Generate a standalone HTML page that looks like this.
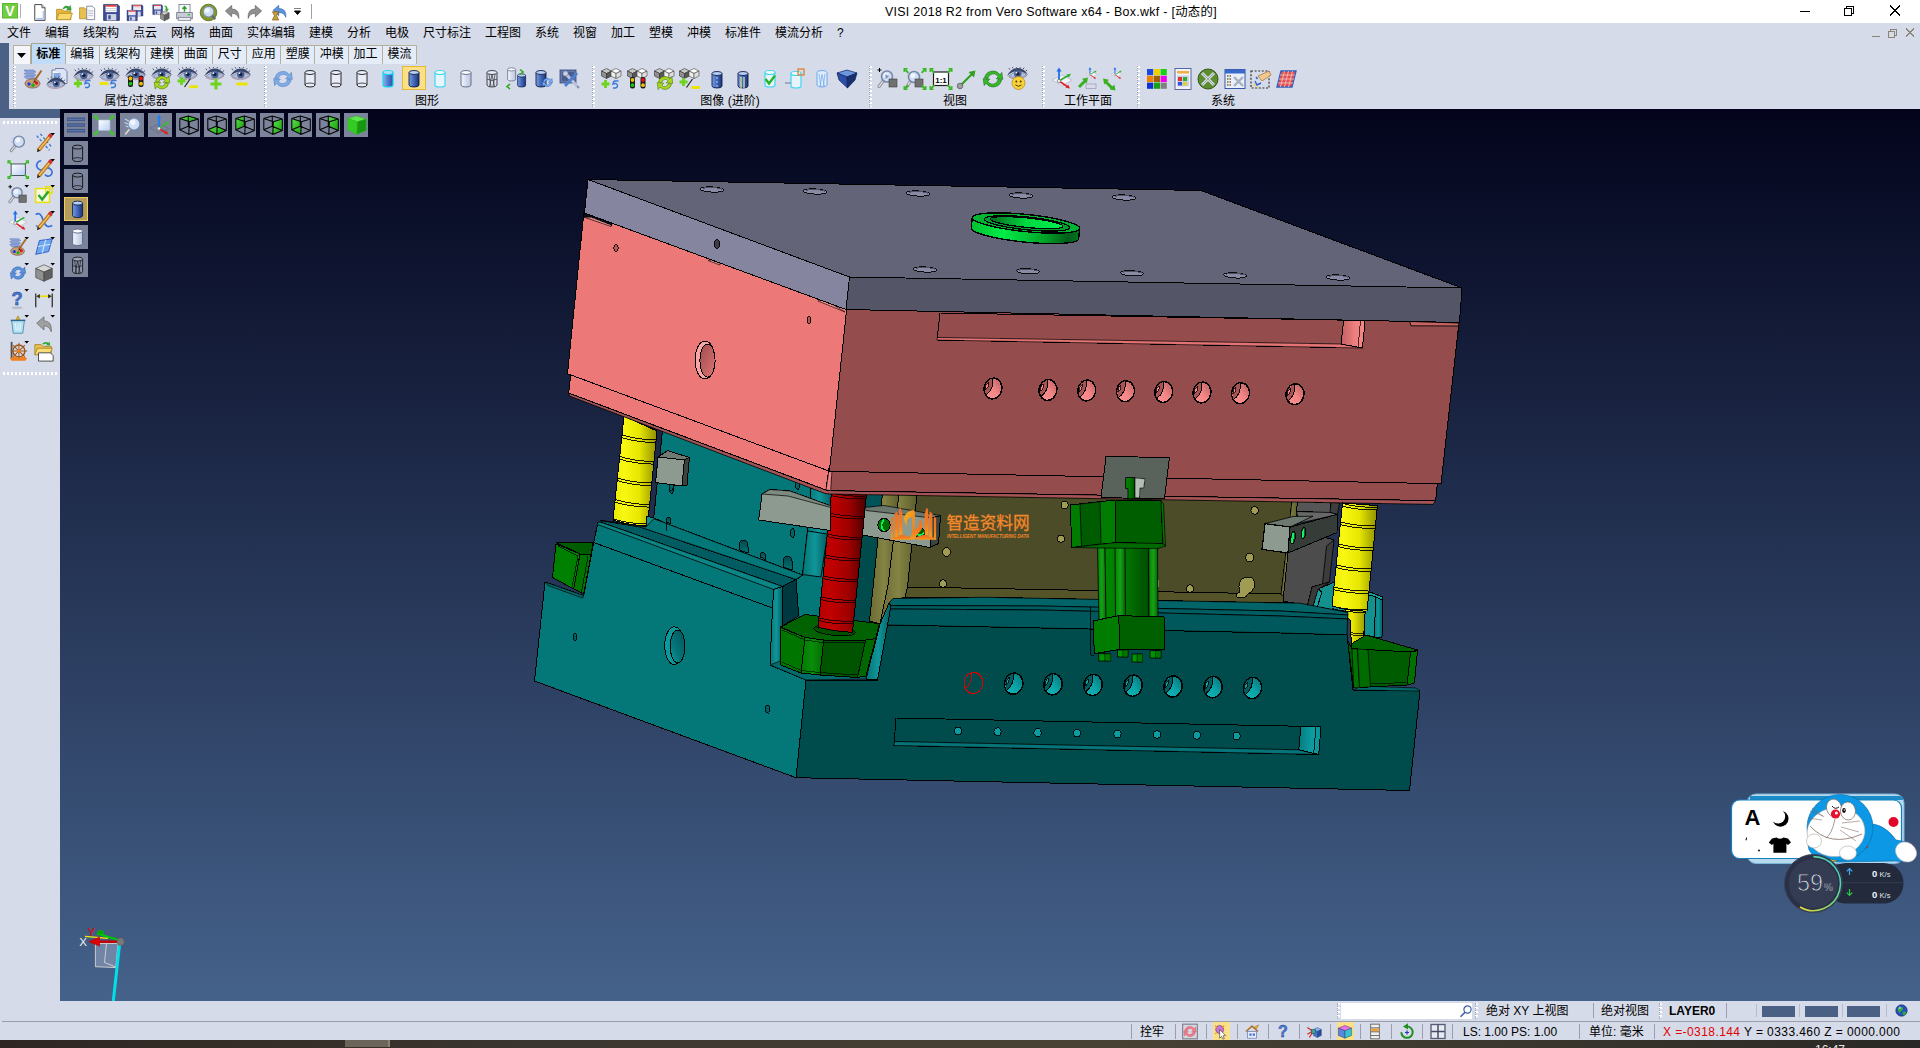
<!DOCTYPE html><html><head><meta charset="utf-8"><title>VISI 2018 R2 from Vero Software x64 - Box.wkf</title><style>
*{box-sizing:border-box;margin:0;padding:0}
html,body{width:1920px;height:1048px;overflow:hidden;background:#d6dbe9;font-family:"Liberation Sans","Noto Sans CJK SC",sans-serif;font-size:12px;color:#000}
.abs{position:absolute}
#title{position:absolute;left:0;top:0;width:1920px;height:23px;background:#fff}
#title .t{position:absolute;left:885px;top:2px;font-size:12.4px;white-space:nowrap;color:#000;letter-spacing:0.3px}
#menu{position:absolute;left:0;top:23px;width:1920px;height:20px;background:#d6dbe9}
#menu span{position:absolute;top:2px;white-space:nowrap;font-size:12px;line-height:16px}
#tb{position:absolute;left:9px;top:43px;width:1911px;height:66px;background:#d6dbe9}
#tbrow{position:absolute;left:9px;top:64px;width:1911px;height:45px;background:#d6dbe9}
#strip1{position:absolute;left:0;top:43px;width:9px;height:75px;background:#4a6084}
#strip2{position:absolute;left:0;top:109px;width:60px;height:9px;background:#4a6084}
.tab{position:absolute;top:45px;height:19px;border:1px solid #b4b09c;border-bottom:none;background:#e4ecf8;font-size:12px;line-height:17px;text-align:center;white-space:nowrap}
.tab.act{background:#c0dcf8;font-weight:bold;top:42.5px;height:21.5px;line-height:20px;border-color:#a8a890}
.lbl{position:absolute;top:94px;font-size:12px;line-height:14px;white-space:nowrap;transform:translateX(-50%)}
.sep{position:absolute;top:66px;width:3px;height:41px;background-image:repeating-linear-gradient(#fff 0 2px,transparent 2px 4px);border-left:1px dotted #a0a4b4}
#left{position:absolute;left:0;top:118px;width:60px;height:883px;background:#d6dbe9}
#canvas{position:absolute;left:60px;top:109px;width:1860px;height:892px;background:linear-gradient(#03041c,#45628b);overflow:hidden}
.vb{position:absolute;width:24px;height:24px;background:#7c849c}
#status{position:absolute;left:0;top:1001px;width:1920px;height:40px;background:#d6dbe9}
#task{position:absolute;left:0;top:1040px;width:1920px;height:8px;background:linear-gradient(90deg,#2e2622,#3c3630 30%,#484234 55%,#3e3a30 75%,#2a2826)}
.st{position:absolute;white-space:nowrap;font-size:12px;line-height:14px}
.vs{position:absolute;width:1px;height:15px;background:#9a9eae}
</style></head><body>
<div id="canvas"><svg width="1860" height="892" viewBox="60 109 1860 892" style="position:absolute;left:0;top:0" shape-rendering="crispEdges"><defs>
<linearGradient id="gy" x1="0" x2="1"><stop offset="0" stop-color="#e8e800"/><stop offset=".25" stop-color="#f8f814"/><stop offset=".6" stop-color="#e6e600"/><stop offset="1" stop-color="#8e8e00"/></linearGradient>
<linearGradient id="gr" x1="0" x2="1"><stop offset="0" stop-color="#b80000"/><stop offset=".3" stop-color="#c00000"/><stop offset=".65" stop-color="#9c0000"/><stop offset="1" stop-color="#480000"/></linearGradient>
<linearGradient id="gg" x1="0" x2="1"><stop offset="0" stop-color="#008800"/><stop offset=".45" stop-color="#007800"/><stop offset="1" stop-color="#004c00"/></linearGradient>
<linearGradient id="grod" x1="0" x2="1"><stop offset="0" stop-color="#008400"/><stop offset=".5" stop-color="#18a018"/><stop offset="1" stop-color="#006400"/></linearGradient>
<linearGradient id="gring" x1="0" x2="1"><stop offset="0" stop-color="#00c030"/><stop offset=".3" stop-color="#00ec48"/><stop offset=".7" stop-color="#00a028"/><stop offset=".9" stop-color="#005c18"/><stop offset="1" stop-color="#007820"/></linearGradient>
<linearGradient id="gringi" x1="0" x2="1"><stop offset="0" stop-color="#006820"/><stop offset=".5" stop-color="#00d840"/><stop offset="1" stop-color="#00f050"/></linearGradient>
<linearGradient id="gtl" x1="0" x2="1"><stop offset="0" stop-color="#047474"/><stop offset=".5" stop-color="#10969a"/><stop offset="1" stop-color="#035c60"/></linearGradient>
<linearGradient id="gnut" x1="0" x2="1"><stop offset="0" stop-color="#007a00"/><stop offset=".5" stop-color="#0a8c0a"/><stop offset="1" stop-color="#006c00"/></linearGradient><linearGradient id="gph2" x1="0" x2="1"><stop offset="0" stop-color="#c06060"/><stop offset=".6" stop-color="#f08080"/><stop offset="1" stop-color="#f48888"/></linearGradient><linearGradient id="gtl2" x1="0" x2="1"><stop offset="0" stop-color="#067c80"/><stop offset=".6" stop-color="#0c9ca0"/><stop offset="1" stop-color="#0a9498"/></linearGradient><linearGradient id="ghp" x1="1" y1="0" x2="0.2" y2="1"><stop offset="0" stop-color="#b05c5c"/><stop offset=".55" stop-color="#f48686"/><stop offset="1" stop-color="#fc9090"/></linearGradient><linearGradient id="ght" x1="1" y1="0" x2="0.2" y2="1"><stop offset="0" stop-color="#046c70"/><stop offset=".55" stop-color="#0aa4a8"/><stop offset="1" stop-color="#10b4b8"/></linearGradient><linearGradient id="gol" x1="0" x2="1"><stop offset="0" stop-color="#6a6a34"/><stop offset=".5" stop-color="#848444"/><stop offset="1" stop-color="#5c5c2c"/></linearGradient>
<linearGradient id="gph" x1="0" x2="1" y1="0" y2="1"><stop offset="0" stop-color="#a04c4c"/><stop offset="1" stop-color="#dc7474"/></linearGradient>
<linearGradient id="gth" x1="1" x2="0" y1="0" y2="1"><stop offset="0" stop-color="#025458"/><stop offset=".6" stop-color="#047478"/><stop offset="1" stop-color="#0c9ca0"/></linearGradient>
<linearGradient id="gwm2" x1="0" x2="0" y1="0" y2="1"><stop offset="0" stop-color="#f07020"/><stop offset=".6" stop-color="#f47c20"/><stop offset="1" stop-color="#f8a020"/></linearGradient><linearGradient id="gwm" x1="0" x2="1" y1="0" y2="1"><stop offset="0" stop-color="#f8b018"/><stop offset="1" stop-color="#f07820"/></linearGradient>
</defs><path d="M624.0,416.0 L657.0,431.0 L647.5,525.6 Q630.2,525.8 613.0,520.0 Z" fill="url(#gy)" stroke="#000" stroke-width="1"/><path d="M622.0,435.0 Q637.0,439.7 656.0,440.0" fill="none" stroke="#000" stroke-width="0.9"/><path d="M621.7,437.6 Q636.7,442.3 655.7,442.6" fill="none" stroke="#000" stroke-width="0.9"/><path d="M619.7,456.5 Q634.7,461.2 653.7,461.5" fill="none" stroke="#000" stroke-width="0.9"/><path d="M619.4,459.1 Q634.4,463.8 653.4,464.1" fill="none" stroke="#000" stroke-width="0.9"/><path d="M617.4,478.0 Q632.4,482.7 651.4,483.0" fill="none" stroke="#000" stroke-width="0.9"/><path d="M617.2,480.6 Q632.2,485.3 651.2,485.6" fill="none" stroke="#000" stroke-width="0.9"/><path d="M615.2,499.5 Q630.2,504.2 649.2,504.5" fill="none" stroke="#000" stroke-width="0.9"/><path d="M614.9,502.1 Q629.9,506.8 648.9,507.1" fill="none" stroke="#000" stroke-width="0.9"/><path d="M613.1,519.0 Q628.1,523.7 647.1,524.0" fill="none" stroke="#000" stroke-width="0.9"/><path d="M612.8,521.6 Q627.8,526.3 646.8,526.6" fill="none" stroke="#000" stroke-width="0.9"/><polygon points="1332.5,604.0 1367.0,609.0 1364.5,622.0 1363.4,643.0 1351.3,643.0 1350.2,620.0" fill="url(#gy)" stroke="#000" stroke-width="1" stroke-linejoin="round" /><polyline points="1350.8,632.5 1357.0,634.0 1363.8,633.5" fill="none" stroke="#000" stroke-width="0.8" /><polyline points="1350.8,634.5 1357.0,636.0 1363.8,635.5" fill="none" stroke="#000" stroke-width="0.8" /><polygon points="1313.0,606.0 1318.0,589.0 1336.0,581.5 1345.0,585.0 1345.0,612.0" fill="#14908e" stroke="#000" stroke-width="1" stroke-linejoin="round" /><polygon points="1318.0,589.0 1322.0,592.0 1317.0,608.0 1313.0,606.0" fill="#1aa0a0" stroke="#000" stroke-width="1" stroke-linejoin="round" /><polygon points="1366.0,594.0 1376.0,597.0 1374.0,637.0 1364.0,635.0" fill="#14908e" stroke="#000" stroke-width="1" stroke-linejoin="round" /><polygon points="1376.0,597.0 1382.5,600.0 1382.0,637.0 1374.0,637.0" fill="url(#gtl)" stroke="#000" stroke-width="1" stroke-linejoin="round" /><polygon points="1366.0,594.0 1370.0,592.0 1382.5,597.0 1382.5,600.0 1376.0,597.0" fill="#18a4a4" stroke="#000" stroke-width="1" stroke-linejoin="round" /><polygon points="663.0,425.0 832.0,488.0 826.0,585.0 802.5,575.0 653.7,518.7" fill="#047878" stroke="#000" stroke-width="1" stroke-linejoin="round" /><polygon points="807.5,531.0 832.0,536.0 832.0,600.0 800.0,640.0 796.0,580.0 802.5,575.0" fill="#047878" stroke="#000" stroke-width="1" stroke-linejoin="round" /><polygon points="811.0,488.0 832.0,492.0 829.0,535.0 807.5,531.0" fill="url(#gtl)" stroke="#000" stroke-width="1" stroke-linejoin="round" /><polygon points="807.5,531.0 827.5,534.0 821.0,577.0 802.5,574.5" fill="url(#gtl)" stroke="#000" stroke-width="0.9" stroke-linejoin="round" /><polygon points="646.0,516.0 654.0,518.0 672.0,526.0 672.0,534.0 646.0,527.0" fill="#14908e" stroke="#000" stroke-width="1" stroke-linejoin="round" /><polygon points="860.0,492.0 884.0,494.0 874.0,583.0 869.0,640.0 845.0,640.0" fill="#004c4c" stroke="#000" stroke-width="1" stroke-linejoin="round" /><polygon points="866.0,494.0 884.0,494.5 880.0,530.0 863.0,526.0" fill="#005458" stroke="#000" stroke-width="0.6" stroke-linejoin="round" /><polygon points="917.0,494.0 1292.0,501.0 1281.0,595.0 1281.0,594.0 907.5,587.0" fill="#4c4c28" stroke="#000" stroke-width="1" stroke-linejoin="round" /><polygon points="907.5,587.0 1281.0,594.0 1300.0,603.2 985.0,597.3 905.0,597.0" fill="#545428" stroke="#000" stroke-width="1" stroke-linejoin="round" /><polygon points="882.5,493.5 899.0,494.0 888.0,585.0 880.0,624.0 869.5,621.0 873.5,583.0" fill="url(#gol)" stroke="#000" stroke-width="1" stroke-linejoin="round" /><polygon points="899.0,494.0 917.0,494.5 907.5,587.0 905.0,597.0 889.0,603.0 880.0,624.0 888.0,585.0" fill="url(#gol)" stroke="#000" stroke-width="1" stroke-linejoin="round" /><polygon points="1292.0,501.0 1298.0,501.0 1288.0,596.0 1281.0,595.0" fill="url(#gol)" stroke="#000" stroke-width="0.8" stroke-linejoin="round" /><ellipse cx="1064.6" cy="505.0" rx="3.6" ry="3.7800000000000002" fill="#a09c54" stroke="#000" stroke-width="0.9"/><ellipse cx="1061.0" cy="538.7" rx="3.6" ry="3.7800000000000002" fill="#a09c54" stroke="#000" stroke-width="0.9"/><ellipse cx="1254.7" cy="510.4" rx="3.8" ry="3.9899999999999998" fill="#a09c54" stroke="#000" stroke-width="0.9"/><ellipse cx="1249.7" cy="557.5" rx="4" ry="4.2" fill="#a09c54" stroke="#000" stroke-width="0.9"/><ellipse cx="946.5" cy="552.0" rx="4.2" ry="4.41" fill="#a09c54" stroke="#000" stroke-width="0.9"/><ellipse cx="943.0" cy="583.5" rx="3.6" ry="3.7800000000000002" fill="#a09c54" stroke="#000" stroke-width="0.9"/><ellipse cx="1190.0" cy="588.5" rx="3.6" ry="3.7800000000000002" fill="#a09c54" stroke="#000" stroke-width="0.9"/><path d="M1240,592 Q1236,580 1246,577 Q1257,576 1254,588 Q1252,592 1248,594 Q1246,599 1237,597 Q1234,595 1240,592Z" fill="#a09c54" stroke="#000" stroke-width="0.9"/><path d="M1157,588 Q1160,582 1157,580" fill="none" stroke="#a09c54" stroke-width="2"/><polygon points="1297.5,501.5 1331.0,502.5 1330.0,512.5 1296.5,511.5" fill="#565656" stroke="#000" stroke-width="1" stroke-linejoin="round" /><polygon points="1331.0,502.5 1339.5,503.0 1337.5,514.5 1330.0,512.5" fill="#3e3e3e" stroke="#000" stroke-width="0.8" stroke-linejoin="round" /><polygon points="1296.5,511.5 1330.0,512.5 1337.5,514.5 1300.0,523.0" fill="#686868" stroke="#000" stroke-width="0.8" stroke-linejoin="round" /><polygon points="1291.0,527.0 1334.0,540.0 1330.0,570.0 1329.4,582.0 1312.0,587.0 1307.5,605.6 1283.0,601.0 1288.0,553.0" fill="#4c4c4c" stroke="#000" stroke-width="1" stroke-linejoin="round" /><polygon points="1326.5,546.0 1334.0,540.0 1329.4,582.0 1322.5,584.0" fill="#3c3c3c" stroke="#000" stroke-width="0.8" stroke-linejoin="round" /><polygon points="1312.0,587.0 1322.5,584.0 1329.4,582.0 1318.0,589.5 1313.0,606.0 1307.5,605.6" fill="#3a3a3a" stroke="#000" stroke-width="0.7" stroke-linejoin="round" /><polygon points="545.0,582.0 583.7,595.6 593.7,542.5 598.0,522.0 640.0,536.0 773.7,589.0 772.5,608.0 770.0,665.0 806.0,680.0 796.0,777.7 534.5,681.0" fill="#047878" stroke="#000" stroke-width="1" stroke-linejoin="round" /><polyline points="593.7,542.5 772.5,608.0" fill="none" stroke="#000" stroke-width="1" /><polygon points="545.0,582.0 583.7,595.6 582.5,598.0 548.0,585.5" fill="#036a6a" stroke="#000" stroke-width="0.7" stroke-linejoin="round" /><polygon points="601.0,520.5 640.0,527.0 796.0,579.5 782.5,586.5 640.0,536.0 603.0,523.0" fill="#005c60" stroke="#000" stroke-width="1" stroke-linejoin="round" /><polygon points="598.0,522.0 603.0,523.0 640.0,536.0 782.5,586.5 773.7,589.5 640.0,540.0 597.5,524.5" fill="#0a8686" stroke="#000" stroke-width="0.8" stroke-linejoin="round" /><polygon points="601.0,520.5 646.0,527.0 653.7,518.7 802.5,575.0 796.0,579.5 640.0,527.0" fill="#047878" stroke="#000" stroke-width="0.8" stroke-linejoin="round" /><polygon points="773.7,589.5 782.5,586.5 782.5,668.0 770.0,665.0 772.5,608.0" fill="url(#gtl)" stroke="#000" stroke-width="1" stroke-linejoin="round" /><polygon points="782.5,586.5 796.0,579.5 798.7,616.0 782.5,626.0" fill="#003840" stroke="#000" stroke-width="1" stroke-linejoin="round" /><polygon points="782.5,626.0 798.7,616.0 822.0,622.0 806.0,640.0 782.5,660.0" fill="#047878" stroke="#000" stroke-width="0.7" stroke-linejoin="round" /><ellipse cx="674.3" cy="645.6" rx="9.6" ry="18.8" fill="#0a9a9e" stroke="#000" stroke-width="1"/><ellipse cx="677.6" cy="646.4" rx="7.4" ry="16.4" fill="url(#gth)" stroke="#000" stroke-width="1"/><ellipse cx="575.0" cy="637.0" rx="1.6" ry="3.6" fill="#036060" stroke="#000" stroke-width="0.9"/><ellipse cx="767.5" cy="709.0" rx="2" ry="4" fill="#036060" stroke="#000" stroke-width="0.9"/><defs><linearGradient id="garch" x1="0" x2="0" y1="0" y2="1"><stop offset="0" stop-color="#014a4e"/><stop offset="1" stop-color="#047074"/></linearGradient></defs><path d="M666.3,522.2 L666.3,519.4 Q666.3,517.5 668.5,517.5 Q670.7,517.5 670.7,521.1 L670.7,523.8Z" fill="url(#garch)" stroke="#000" stroke-width="0.9"/><path d="M739.3,549.9 L739.3,544.4 Q739.3,540.5 743.7,540.5 Q748.1,540.5 748.1,547.6 L748.1,553.1Z" fill="url(#garch)" stroke="#000" stroke-width="0.9"/><path d="M760.5,557.6 L760.5,554.6 Q760.5,552.5 763.0,552.5 Q765.5,552.5 765.5,556.4 L765.5,559.4Z" fill="url(#garch)" stroke="#000" stroke-width="0.9"/><path d="M783.0,566.8 L783.0,560.8 Q783.0,556.5 787.7,556.5 Q792.4,556.5 792.4,564.2 L792.4,570.2Z" fill="url(#garch)" stroke="#000" stroke-width="0.9"/><polyline points="666.3,523.0 666.0,531.0" fill="none" stroke="#000" stroke-width="0.8" /><ellipse cx="797.5" cy="485.0" rx="2.4" ry="4.2" fill="#036468" stroke="#000" stroke-width="0.9"/><ellipse cx="792.5" cy="533.0" rx="2.4" ry="4.2" fill="#036468" stroke="#000" stroke-width="0.9"/><ellipse cx="671.5" cy="489.0" rx="2.4" ry="4.2" fill="#036468" stroke="#000" stroke-width="0.9"/><path d="M669,485 l1,5 l2.5,0 l1,-5" fill="#036468" stroke="#000" stroke-width="0.7"/><polygon points="889.0,603.0 893.0,598.5 985.0,597.3 1300.0,603.2 1348.0,612.5 1348.0,615.0 1280.0,611.0 1040.0,606.0 890.0,605.6" fill="#006468" stroke="#000" stroke-width="0.8" stroke-linejoin="round" /><polygon points="890.0,605.6 1040.0,606.0 1280.0,611.0 1348.0,615.0 1347.5,619.0 1280.0,616.0 1040.0,610.0 889.5,609.0" fill="#005e62" stroke="#000" stroke-width="0.8" stroke-linejoin="round" /><polygon points="889.5,609.0 1040.0,610.0 1280.0,616.0 1347.5,619.0 1347.0,635.0 1280.0,633.0 1040.0,628.0 887.5,625.0" fill="#00585c" stroke="#000" stroke-width="0.8" stroke-linejoin="round" /><polygon points="887.5,625.0 1040.0,628.0 1280.0,633.0 1347.0,635.0 1353.0,690.0 1420.0,691.0 1409.5,790.5 796.0,777.7 806.0,680.0 877.5,680.0" fill="#004c4c" stroke="#000" stroke-width="1" stroke-linejoin="round" /><polygon points="880.0,624.0 889.0,603.0 891.0,606.0 877.5,680.0 866.0,679.0" fill="url(#gtl)" stroke="#000" stroke-width="1" stroke-linejoin="round" /><polygon points="770.0,665.0 806.0,680.0 866.0,679.0 868.0,672.0 800.0,670.0 782.5,660.0" fill="#036a6c" stroke="#000" stroke-width="0.7" stroke-linejoin="round" /><polygon points="1353.0,690.0 1362.0,686.0 1416.0,688.0 1420.0,691.0" fill="#036a6c" stroke="#000" stroke-width="0.7" stroke-linejoin="round" /><ellipse cx="973.5" cy="683.0" rx="9.5" ry="10.5" fill="#004c4c" stroke="#e00000" stroke-width="1.1" transform="rotate(8 973.5 683.0)"/><path d="M972,673 Q971,685 965,689" fill="none" stroke="#e00000" stroke-width="0.9"/><ellipse cx="1013.7" cy="683.7" rx="9.2" ry="10.6" fill="url(#ght)" stroke="#000" stroke-width="1.5" transform="rotate(10 1013.7 683.7)"/><path d="M1013.2,673.4 Q1014.8,684.2 1006.5,690.3 Q1002.2,677.9 1013.2,673.4Z" fill="#035c60" stroke="none"/><path d="M1013.2,673.4 Q1014.8,684.2 1006.5,690.3" fill="none" stroke="#000" stroke-width="1"/><path d="M1009.1,677.3 Q1009.6,682.6 1005.9,684.8 L1006.2,680.5Z" fill="#0aa4a8" stroke="#000" stroke-width="0.8"/><ellipse cx="1053.0" cy="684.3" rx="9.2" ry="10.6" fill="url(#ght)" stroke="#000" stroke-width="1.5" transform="rotate(10 1053.0 684.3)"/><path d="M1052.5,674.0 Q1054.1,684.8 1045.8,690.9 Q1041.5,678.5 1052.5,674.0Z" fill="#035c60" stroke="none"/><path d="M1052.5,674.0 Q1054.1,684.8 1045.8,690.9" fill="none" stroke="#000" stroke-width="1"/><path d="M1048.4,677.9 Q1048.9,683.2 1045.2,685.4 L1045.5,681.1Z" fill="#0aa4a8" stroke="#000" stroke-width="0.8"/><ellipse cx="1093.0" cy="685.0" rx="9.2" ry="10.6" fill="url(#ght)" stroke="#000" stroke-width="1.5" transform="rotate(10 1093.0 685.0)"/><path d="M1092.5,674.7 Q1094.1,685.5 1085.8,691.6 Q1081.5,679.2 1092.5,674.7Z" fill="#035c60" stroke="none"/><path d="M1092.5,674.7 Q1094.1,685.5 1085.8,691.6" fill="none" stroke="#000" stroke-width="1"/><path d="M1088.4,678.6 Q1088.9,683.9 1085.2,686.1 L1085.5,681.8Z" fill="#0aa4a8" stroke="#000" stroke-width="0.8"/><ellipse cx="1133.0" cy="685.7" rx="9.2" ry="10.6" fill="url(#ght)" stroke="#000" stroke-width="1.5" transform="rotate(10 1133.0 685.7)"/><path d="M1132.5,675.4 Q1134.1,686.2 1125.8,692.3 Q1121.5,679.9 1132.5,675.4Z" fill="#035c60" stroke="none"/><path d="M1132.5,675.4 Q1134.1,686.2 1125.8,692.3" fill="none" stroke="#000" stroke-width="1"/><path d="M1128.4,679.3 Q1128.9,684.6 1125.2,686.8 L1125.5,682.5Z" fill="#0aa4a8" stroke="#000" stroke-width="0.8"/><ellipse cx="1173.0" cy="686.5" rx="9.2" ry="10.6" fill="url(#ght)" stroke="#000" stroke-width="1.5" transform="rotate(10 1173.0 686.5)"/><path d="M1172.5,676.2 Q1174.1,687.0 1165.8,693.1 Q1161.5,680.7 1172.5,676.2Z" fill="#035c60" stroke="none"/><path d="M1172.5,676.2 Q1174.1,687.0 1165.8,693.1" fill="none" stroke="#000" stroke-width="1"/><path d="M1168.4,680.1 Q1168.9,685.4 1165.2,687.6 L1165.5,683.3Z" fill="#0aa4a8" stroke="#000" stroke-width="0.8"/><ellipse cx="1213.0" cy="687.2" rx="9.2" ry="10.6" fill="url(#ght)" stroke="#000" stroke-width="1.5" transform="rotate(10 1213.0 687.2)"/><path d="M1212.5,676.9 Q1214.1,687.7 1205.8,693.8 Q1201.5,681.4 1212.5,676.9Z" fill="#035c60" stroke="none"/><path d="M1212.5,676.9 Q1214.1,687.7 1205.8,693.8" fill="none" stroke="#000" stroke-width="1"/><path d="M1208.4,680.8 Q1208.9,686.1 1205.2,688.3 L1205.5,684.0Z" fill="#0aa4a8" stroke="#000" stroke-width="0.8"/><ellipse cx="1252.5" cy="688.0" rx="9.2" ry="10.6" fill="url(#ght)" stroke="#000" stroke-width="1.5" transform="rotate(10 1252.5 688.0)"/><path d="M1252.0,677.7 Q1253.6,688.5 1245.3,694.6 Q1241.0,682.2 1252.0,677.7Z" fill="#035c60" stroke="none"/><path d="M1252.0,677.7 Q1253.6,688.5 1245.3,694.6" fill="none" stroke="#000" stroke-width="1"/><path d="M1247.9,681.6 Q1248.4,686.9 1244.7,689.1 L1245.0,684.8Z" fill="#0aa4a8" stroke="#000" stroke-width="0.8"/><polygon points="896.0,718.0 1321.0,726.7 1318.7,754.5 894.0,745.5" fill="#004c4c" stroke="#000" stroke-width="1" stroke-linejoin="round" /><polygon points="894.5,741.5 1298.7,749.8 1318.7,754.5 894.0,745.5" fill="#067478" stroke="#000" stroke-width="0.8" stroke-linejoin="round" /><polygon points="1301.0,726.3 1321.0,726.7 1318.7,754.5 1298.7,749.8" fill="url(#gtl2)" stroke="#000" stroke-width="1" stroke-linejoin="round" /><polyline points="1316.0,726.6 1313.7,753.4" fill="none" stroke="#000" stroke-width="0.8" /><ellipse cx="958.0" cy="731.0" rx="3.7" ry="3.9" fill="#0a9ca0" stroke="#000" stroke-width="0.9"/><ellipse cx="997.5" cy="731.8" rx="3.7" ry="3.9" fill="#0a9ca0" stroke="#000" stroke-width="0.9"/><ellipse cx="1037.5" cy="732.5" rx="3.7" ry="3.9" fill="#0a9ca0" stroke="#000" stroke-width="0.9"/><ellipse cx="1077.0" cy="733.2" rx="3.7" ry="3.9" fill="#0a9ca0" stroke="#000" stroke-width="0.9"/><ellipse cx="1117.5" cy="733.9" rx="3.7" ry="3.9" fill="#0a9ca0" stroke="#000" stroke-width="0.9"/><ellipse cx="1157.0" cy="734.6" rx="3.7" ry="3.9" fill="#0a9ca0" stroke="#000" stroke-width="0.9"/><ellipse cx="1197.0" cy="735.3" rx="3.7" ry="3.9" fill="#0a9ca0" stroke="#000" stroke-width="0.9"/><ellipse cx="1236.7" cy="736.0" rx="3.7" ry="3.9" fill="#0a9ca0" stroke="#000" stroke-width="0.9"/><polygon points="556.0,542.5 593.0,543.0 591.0,555.0 580.0,554.0" fill="#005c00" stroke="#000" stroke-width="1" stroke-linejoin="round" /><polygon points="556.0,544.0 580.0,554.0 573.7,589.0 552.5,577.5" fill="#008000" stroke="#000" stroke-width="1" stroke-linejoin="round" /><polygon points="580.0,554.0 591.0,555.0 583.7,594.0 573.7,589.0" fill="#007400" stroke="#000" stroke-width="1" stroke-linejoin="round" /><polyline points="558.0,546.0 578.0,556.0 572.0,587.0" fill="none" stroke="#000" stroke-width="0.7" /><polyline points="588.0,556.0 581.5,592.0" fill="none" stroke="#000" stroke-width="0.7" /><polygon points="780.6,627.0 805.0,614.5 879.4,623.7 875.6,638.7 865.6,640.0 823.7,640.0 805.0,637.5" fill="#006200" stroke="#000" stroke-width="1" stroke-linejoin="round" /><polygon points="780.6,627.5 805.0,637.5 801.0,673.0 780.6,665.0" fill="#007600" stroke="#000" stroke-width="1" stroke-linejoin="round" /><polygon points="805.0,637.5 823.7,640.0 820.0,675.0 801.0,673.0" fill="url(#gnut)" stroke="#000" stroke-width="1" stroke-linejoin="round" /><polygon points="823.7,640.0 865.6,640.0 857.5,677.5 820.0,675.0" fill="#005400" stroke="#000" stroke-width="1" stroke-linejoin="round" /><polygon points="865.6,640.0 875.6,638.7 866.0,676.0 857.5,677.5" fill="#006800" stroke="#000" stroke-width="1" stroke-linejoin="round" /><polyline points="782.0,630.0 805.0,640.0 823.0,642.5 864.0,642.5" fill="none" stroke="#000" stroke-width="0.6" /><polyline points="782.0,662.0 801.0,670.5 820.0,672.5 857.0,675.0" fill="none" stroke="#000" stroke-width="0.6" /><ellipse cx="834.5" cy="630.5" rx="21" ry="5" fill="#005000" stroke="#000" stroke-width="0.9" transform="rotate(6 834.5 630.5)"/><path d="M831.5,492.0 L866.5,494.0 L852.5,632.5 Q835.2,631.5 818.0,627.5 Z" fill="url(#gr)" stroke="#000" stroke-width="1"/><path d="M831.4,493.0 Q846.4,496.9 865.4,496.0" fill="none" stroke="#200000" stroke-width="0.9"/><path d="M831.1,495.6 Q846.1,499.5 865.1,498.6" fill="none" stroke="#200000" stroke-width="0.9"/><path d="M829.4,513.0 Q844.4,516.9 863.4,516.0" fill="none" stroke="#200000" stroke-width="0.9"/><path d="M829.1,515.6 Q844.1,519.5 863.1,518.6" fill="none" stroke="#200000" stroke-width="0.9"/><path d="M827.3,534.0 Q842.3,537.9 861.3,537.0" fill="none" stroke="#200000" stroke-width="0.9"/><path d="M827.1,536.6 Q842.1,540.5 861.1,539.6" fill="none" stroke="#200000" stroke-width="0.9"/><path d="M825.2,555.0 Q840.2,558.9 859.2,558.0" fill="none" stroke="#200000" stroke-width="0.9"/><path d="M825.0,557.6 Q840.0,561.5 859.0,560.6" fill="none" stroke="#200000" stroke-width="0.9"/><path d="M823.1,576.0 Q838.1,579.9 857.1,579.0" fill="none" stroke="#200000" stroke-width="0.9"/><path d="M822.9,578.6 Q837.9,582.5 856.9,581.6" fill="none" stroke="#200000" stroke-width="0.9"/><path d="M821.0,597.0 Q836.0,600.9 855.0,600.0" fill="none" stroke="#200000" stroke-width="0.9"/><path d="M820.8,599.6 Q835.8,603.5 854.8,602.6" fill="none" stroke="#200000" stroke-width="0.9"/><path d="M818.9,618.0 Q833.9,621.9 852.9,621.0" fill="none" stroke="#200000" stroke-width="0.9"/><path d="M818.7,620.6 Q833.7,624.5 852.7,623.6" fill="none" stroke="#200000" stroke-width="0.9"/><polygon points="762.0,494.0 770.0,489.5 790.0,491.0 830.0,505.6 830.0,530.5 758.7,520.0" fill="#8c9a90" stroke="#000" stroke-width="1" stroke-linejoin="round" /><polygon points="762.0,494.0 770.0,489.5 790.0,491.0 831.0,506.0 831.0,507.5 788.0,496.0" fill="#7c8a80" stroke="#000" stroke-width="0.7" stroke-linejoin="round" /><polygon points="865.0,507.5 940.6,515.6 930.0,547.5 862.5,535.0" fill="#8c9a90" stroke="#000" stroke-width="1" stroke-linejoin="round" /><polygon points="865.0,507.5 884.0,505.5 940.6,515.6 932.0,518.0 866.0,510.5" fill="#6a766e" stroke="#000" stroke-width="0.7" stroke-linejoin="round" /><polygon points="932.0,518.0 940.6,515.6 938.5,543.5 930.0,547.5" fill="#3c4440" stroke="#000" stroke-width="1" stroke-linejoin="round" /><ellipse cx="884.0" cy="525.0" rx="6.2" ry="6.6" fill="#007000" stroke="#000" stroke-width="1"/><path d="M884,519.5 Q879,525 884,531" fill="none" stroke="#10f060" stroke-width="1.6"/><ellipse cx="920.0" cy="533.0" rx="5" ry="5" fill="#006000" stroke="#000" stroke-width="0.9"/><path d="M917,534 Q921,537 924,532" fill="none" stroke="#10f060" stroke-width="1.4"/><polygon points="658.0,457.0 667.5,450.6 689.4,457.5 684.4,460.0" fill="#6e7a72" stroke="#000" stroke-width="1" stroke-linejoin="round" /><polygon points="658.0,457.0 684.4,460.0 682.0,486.0 655.6,482.5" fill="#8c9a90" stroke="#000" stroke-width="1" stroke-linejoin="round" /><polygon points="684.4,460.0 689.4,457.5 687.0,485.0 682.0,486.0" fill="#3c4440" stroke="#000" stroke-width="1" stroke-linejoin="round" /><polygon points="568.7,393.0 826.0,490.0 830.6,490.6 1435.6,500.6 1433.0,504.4 830.0,494.0 825.0,493.5 569.5,396.0" fill="#a45454" stroke="#000" stroke-width="0.8" stroke-linejoin="round" /><polygon points="571.0,372.0 829.4,468.0 826.0,490.0 568.7,393.0" fill="#ec7878" stroke="#000" stroke-width="1" stroke-linejoin="round" /><polygon points="583.9,212.0 846.8,308.0 829.4,471.2 567.5,373.7" fill="#ec7878" stroke="#000" stroke-width="1" stroke-linejoin="round" /><polygon points="829.0,468.0 1437.8,480.0 1435.6,500.6 830.6,490.6 826.0,490.0" fill="#944c4c" stroke="#000" stroke-width="1" stroke-linejoin="round" /><polygon points="829.0,470.0 832.0,470.0 830.6,490.6 826.0,490.0" fill="#f08484" stroke="#000" stroke-width="0.7" stroke-linejoin="round" /><polygon points="846.8,308.0 1459.3,320.0 1441.0,483.7 829.4,471.2" fill="#944c4c" stroke="#000" stroke-width="1" stroke-linejoin="round" /><polygon points="940.0,313.0 1365.0,320.5 1362.5,348.0 937.0,340.0" fill="#944c4c" stroke="#000" stroke-width="1" stroke-linejoin="round" /><polygon points="937.3,337.5 1341.0,344.0 1362.5,348.0 937.0,340.0" fill="#e47474" stroke="#000" stroke-width="0.7" stroke-linejoin="round" /><polygon points="1343.7,320.5 1365.0,321.0 1362.5,348.0 1341.0,344.0" fill="url(#gph2)" stroke="#000" stroke-width="1" stroke-linejoin="round" /><polyline points="1360.5,321.0 1358.0,347.0" fill="none" stroke="#000" stroke-width="0.7" /><polygon points="1409.6,321.5 1459.0,323.0 1458.3,326.0 1411.0,325.8" fill="#c86464" stroke="#000" stroke-width="0.9" stroke-linejoin="round" /><polygon points="1146.0,313.0 1224.0,314.5 1222.0,316.5 1150.0,315.0" fill="#f08080" stroke="#000" stroke-width="0.6" stroke-linejoin="round" /><ellipse cx="993.0" cy="388.5" rx="8.9" ry="10.4" fill="url(#ghp)" stroke="#000" stroke-width="1.5" transform="rotate(10 993.0 388.5)"/><path d="M992.6,378.4 Q994.1,389.0 986.1,394.9 Q981.9,382.8 992.6,378.4Z" fill="#a85454" stroke="none"/><path d="M992.6,378.4 Q994.1,389.0 986.1,394.9" fill="none" stroke="#000" stroke-width="1"/><path d="M988.5,382.3 Q989.0,387.5 985.4,389.5 L985.7,385.4Z" fill="#f88c8c" stroke="#000" stroke-width="0.8"/><ellipse cx="1048.0" cy="390.0" rx="8.9" ry="10.4" fill="url(#ghp)" stroke="#000" stroke-width="1.5" transform="rotate(10 1048.0 390.0)"/><path d="M1047.6,379.9 Q1049.1,390.5 1041.1,396.4 Q1036.9,384.3 1047.6,379.9Z" fill="#a85454" stroke="none"/><path d="M1047.6,379.9 Q1049.1,390.5 1041.1,396.4" fill="none" stroke="#000" stroke-width="1"/><path d="M1043.5,383.8 Q1044.0,389.0 1040.4,391.0 L1040.7,386.9Z" fill="#f88c8c" stroke="#000" stroke-width="0.8"/><ellipse cx="1086.7" cy="390.5" rx="8.9" ry="10.4" fill="url(#ghp)" stroke="#000" stroke-width="1.5" transform="rotate(10 1086.7 390.5)"/><path d="M1086.3,380.4 Q1087.8,391.0 1079.8,396.9 Q1075.6,384.8 1086.3,380.4Z" fill="#a85454" stroke="none"/><path d="M1086.3,380.4 Q1087.8,391.0 1079.8,396.9" fill="none" stroke="#000" stroke-width="1"/><path d="M1082.2,384.3 Q1082.7,389.5 1079.1,391.5 L1079.4,387.4Z" fill="#f88c8c" stroke="#000" stroke-width="0.8"/><ellipse cx="1125.5" cy="391.2" rx="8.9" ry="10.4" fill="url(#ghp)" stroke="#000" stroke-width="1.5" transform="rotate(10 1125.5 391.2)"/><path d="M1125.1,381.1 Q1126.6,391.7 1118.6,397.6 Q1114.4,385.5 1125.1,381.1Z" fill="#a85454" stroke="none"/><path d="M1125.1,381.1 Q1126.6,391.7 1118.6,397.6" fill="none" stroke="#000" stroke-width="1"/><path d="M1121.0,385.0 Q1121.5,390.2 1117.9,392.2 L1118.2,388.1Z" fill="#f88c8c" stroke="#000" stroke-width="0.8"/><ellipse cx="1163.7" cy="392.0" rx="8.9" ry="10.4" fill="url(#ghp)" stroke="#000" stroke-width="1.5" transform="rotate(10 1163.7 392.0)"/><path d="M1163.3,381.9 Q1164.8,392.5 1156.8,398.4 Q1152.6,386.3 1163.3,381.9Z" fill="#a85454" stroke="none"/><path d="M1163.3,381.9 Q1164.8,392.5 1156.8,398.4" fill="none" stroke="#000" stroke-width="1"/><path d="M1159.2,385.8 Q1159.7,391.0 1156.1,393.0 L1156.4,388.9Z" fill="#f88c8c" stroke="#000" stroke-width="0.8"/><ellipse cx="1202.0" cy="392.5" rx="8.9" ry="10.4" fill="url(#ghp)" stroke="#000" stroke-width="1.5" transform="rotate(10 1202.0 392.5)"/><path d="M1201.6,382.4 Q1203.1,393.0 1195.1,398.9 Q1190.9,386.8 1201.6,382.4Z" fill="#a85454" stroke="none"/><path d="M1201.6,382.4 Q1203.1,393.0 1195.1,398.9" fill="none" stroke="#000" stroke-width="1"/><path d="M1197.5,386.3 Q1198.0,391.5 1194.4,393.5 L1194.7,389.4Z" fill="#f88c8c" stroke="#000" stroke-width="0.8"/><ellipse cx="1240.5" cy="393.2" rx="8.9" ry="10.4" fill="url(#ghp)" stroke="#000" stroke-width="1.5" transform="rotate(10 1240.5 393.2)"/><path d="M1240.1,383.1 Q1241.6,393.7 1233.6,399.6 Q1229.4,387.5 1240.1,383.1Z" fill="#a85454" stroke="none"/><path d="M1240.1,383.1 Q1241.6,393.7 1233.6,399.6" fill="none" stroke="#000" stroke-width="1"/><path d="M1236.0,387.0 Q1236.5,392.2 1232.9,394.2 L1233.2,390.1Z" fill="#f88c8c" stroke="#000" stroke-width="0.8"/><ellipse cx="1295.0" cy="394.2" rx="8.9" ry="10.4" fill="url(#ghp)" stroke="#000" stroke-width="1.5" transform="rotate(10 1295.0 394.2)"/><path d="M1294.6,384.1 Q1296.1,394.7 1288.1,400.6 Q1283.9,388.5 1294.6,384.1Z" fill="#a85454" stroke="none"/><path d="M1294.6,384.1 Q1296.1,394.7 1288.1,400.6" fill="none" stroke="#000" stroke-width="1"/><path d="M1290.5,388.0 Q1291.0,393.2 1287.4,395.2 L1287.7,391.1Z" fill="#f88c8c" stroke="#000" stroke-width="0.8"/><ellipse cx="705.0" cy="360.0" rx="10" ry="19" fill="#f8a4a4" stroke="#000" stroke-width="1"/><ellipse cx="707.5" cy="360.5" rx="7.6" ry="16.5" fill="url(#gph)" stroke="#000" stroke-width="1"/><ellipse cx="616.0" cy="248.0" rx="2.2" ry="3.6" fill="#b85858" stroke="#000" stroke-width="0.9"/><ellipse cx="808.8" cy="320.0" rx="1.8" ry="3.6" fill="#b85858" stroke="#000" stroke-width="0.9"/><polygon points="584.2,213.0 612.0,223.3 611.5,226.0 583.8,217.0" fill="#0c0c1c" stroke="#000" stroke-width="0.5" stroke-linejoin="round" /><polygon points="584.0,217.0 611.0,226.5 611.3,225.0 592.0,217.5" fill="#f09090" stroke="#000" stroke-width="0.6" stroke-linejoin="round" /><polygon points="708.0,260.5 720.0,265.0 720.0,263.0 712.0,259.8" fill="#f09090" stroke="#000" stroke-width="0.6" stroke-linejoin="round" /><polygon points="818.0,301.0 845.0,312.0 831.0,303.5 822.0,300.0" fill="#f09090" stroke="#000" stroke-width="0.6" stroke-linejoin="round" /><polygon points="588.0,179.5 849.5,277.0 846.0,309.5 584.5,213.0" fill="#8585a0" stroke="#000" stroke-width="1" stroke-linejoin="round" /><polygon points="849.5,277.0 1462.0,288.0 1459.5,322.5 846.0,309.5" fill="#555568" stroke="#000" stroke-width="1" stroke-linejoin="round" /><polygon points="588.0,179.5 1201.0,190.5 1462.0,288.0 849.5,277.0" fill="#646478" stroke="#000" stroke-width="1" stroke-linejoin="round" /><ellipse cx="717.0" cy="244.0" rx="2.6" ry="4.6" fill="#3c3c4c" stroke="#000" stroke-width="0.9"/><ellipse cx="712.0" cy="189.5" rx="11.5" ry="2.6" fill="#8a8aa4" stroke="#000" stroke-width="0.9" transform="rotate(3 712.0 189.5)"/><path d="M703.0,188.3 Q712.0,186.1 722.0,189.1" fill="none" stroke="#505064" stroke-width="1.1"/><ellipse cx="815.0" cy="191.5" rx="11.5" ry="2.6" fill="#8a8aa4" stroke="#000" stroke-width="0.9" transform="rotate(3 815.0 191.5)"/><path d="M806.0,190.3 Q815.0,188.1 825.0,191.1" fill="none" stroke="#505064" stroke-width="1.1"/><ellipse cx="918.0" cy="193.5" rx="11.5" ry="2.6" fill="#8a8aa4" stroke="#000" stroke-width="0.9" transform="rotate(3 918.0 193.5)"/><path d="M909.0,192.3 Q918.0,190.1 928.0,193.1" fill="none" stroke="#505064" stroke-width="1.1"/><ellipse cx="1021.0" cy="195.5" rx="11.5" ry="2.6" fill="#8a8aa4" stroke="#000" stroke-width="0.9" transform="rotate(3 1021.0 195.5)"/><path d="M1012.0,194.3 Q1021.0,192.1 1031.0,195.1" fill="none" stroke="#505064" stroke-width="1.1"/><ellipse cx="1124.0" cy="197.5" rx="11.5" ry="2.6" fill="#8a8aa4" stroke="#000" stroke-width="0.9" transform="rotate(3 1124.0 197.5)"/><path d="M1115.0,196.3 Q1124.0,194.1 1134.0,197.1" fill="none" stroke="#505064" stroke-width="1.1"/><ellipse cx="925.0" cy="269.5" rx="11.5" ry="2.6" fill="#8a8aa4" stroke="#000" stroke-width="0.9" transform="rotate(3 925.0 269.5)"/><path d="M916.0,268.3 Q925.0,266.1 935.0,269.1" fill="none" stroke="#505064" stroke-width="1.1"/><ellipse cx="1028.0" cy="271.3" rx="11.5" ry="2.6" fill="#8a8aa4" stroke="#000" stroke-width="0.9" transform="rotate(3 1028.0 271.3)"/><path d="M1019.0,270.1 Q1028.0,267.9 1038.0,270.9" fill="none" stroke="#505064" stroke-width="1.1"/><ellipse cx="1132.0" cy="273.3" rx="11.5" ry="2.6" fill="#8a8aa4" stroke="#000" stroke-width="0.9" transform="rotate(3 1132.0 273.3)"/><path d="M1123.0,272.1 Q1132.0,269.9 1142.0,272.9" fill="none" stroke="#505064" stroke-width="1.1"/><ellipse cx="1235.0" cy="275.4" rx="11.5" ry="2.6" fill="#8a8aa4" stroke="#000" stroke-width="0.9" transform="rotate(3 1235.0 275.4)"/><path d="M1226.0,274.2 Q1235.0,272.0 1245.0,275.0" fill="none" stroke="#505064" stroke-width="1.1"/><ellipse cx="1338.0" cy="277.5" rx="11.5" ry="2.6" fill="#8a8aa4" stroke="#000" stroke-width="0.9" transform="rotate(3 1338.0 277.5)"/><path d="M1329.0,276.3 Q1338.0,274.1 1348.0,277.1" fill="none" stroke="#505064" stroke-width="1.1"/><g transform="rotate(5.8 1026 223)"><path d="M972,223 L972,233.5 A54,8.6 0 0 0 1080,233.5 L1080,223 Z" fill="url(#gring)" stroke="#000" stroke-width="1.4"/><ellipse cx="1026" cy="223" rx="54" ry="8.6" fill="#00b432" stroke="#000" stroke-width="1.4"/><ellipse cx="1027" cy="223.3" rx="43" ry="6.4" fill="#00a02c" stroke="#000" stroke-width="1.3"/><ellipse cx="1026.5" cy="222.6" rx="36.5" ry="4.8" fill="url(#gringi)" stroke="#000" stroke-width="1.3"/></g><polygon points="1106.0,456.5 1169.4,457.5 1164.4,499.0 1101.0,497.5" fill="#5a625c" stroke="#000" stroke-width="1" stroke-linejoin="round" /><polygon points="1125.6,477.5 1135.0,477.5 1135.0,498.7 1128.0,498.7 1128.0,488.7 1125.6,488.7" fill="url(#gg)" stroke="#000" stroke-width="0.8" stroke-linejoin="round" /><polygon points="1135.0,478.0 1145.0,478.8 1143.7,488.0 1140.0,488.0 1139.4,498.0 1135.0,497.5" fill="#b4beb8" stroke="#000" stroke-width="0.6" stroke-linejoin="round" /><polygon points="1097.5,545.0 1105.0,545.0 1106.5,622.0 1099.0,622.0" fill="url(#grod)" stroke="#000" stroke-width="0.8" stroke-linejoin="round" /><polygon points="1105.0,544.0 1148.7,544.0 1149.0,618.0 1106.0,620.0" fill="url(#gg)" stroke="#000" stroke-width="0.8" stroke-linejoin="round" /><polygon points="1115.0,544.0 1125.0,544.0 1125.5,618.0 1115.5,619.0" fill="url(#grod)" stroke="#000" stroke-width="0.8" stroke-linejoin="round" /><polygon points="1148.7,544.0 1157.5,544.0 1158.0,618.0 1149.0,618.0" fill="url(#grod)" stroke="#000" stroke-width="0.8" stroke-linejoin="round" /><polygon points="1070.0,505.0 1115.0,500.0 1116.0,542.5 1072.0,547.5" fill="#007c00" stroke="#000" stroke-width="1" stroke-linejoin="round" /><polygon points="1080.0,504.0 1100.0,501.7 1101.0,544.0 1081.5,546.4" fill="#005c00" stroke="#000" stroke-width="0.8" stroke-linejoin="round" /><polygon points="1115.0,500.0 1161.0,500.6 1163.0,543.7 1116.0,542.5" fill="#005e00" stroke="#000" stroke-width="1" stroke-linejoin="round" /><polygon points="1161.0,500.6 1163.5,504.0 1165.5,546.0 1163.0,543.7" fill="#007800" stroke="#000" stroke-width="0.7" stroke-linejoin="round" /><polygon points="1072.0,547.5 1116.0,542.5 1163.0,543.7 1165.5,546.0 1158.0,548.5 1096.0,548.0" fill="#006a00" stroke="#000" stroke-width="0.7" stroke-linejoin="round" /><polygon points="1093.0,621.0 1118.7,615.6 1120.0,649.4 1094.4,653.7" fill="#007c00" stroke="#000" stroke-width="1" stroke-linejoin="round" /><polygon points="1118.7,615.6 1164.4,617.0 1165.0,650.0 1120.0,649.4" fill="#006000" stroke="#000" stroke-width="1" stroke-linejoin="round" /><polyline points="1091.0,606.0 1090.5,655.0 1094.0,656.5" fill="none" stroke="#000" stroke-width="0.8" /><polygon points="1098.7,653.7 1110.6,653.7 1110.6,661.0 1098.7,661.0" fill="#009400" stroke="#000" stroke-width="0.8" stroke-linejoin="round" /><polygon points="1104.7,653.7 1110.6,653.7 1110.6,661.0 1104.7,661.0" fill="#007800" stroke="#000" stroke-width="0.5" stroke-linejoin="round" /><polygon points="1117.5,650.0 1128.0,650.0 1128.0,657.0 1117.5,657.0" fill="#009400" stroke="#000" stroke-width="0.8" stroke-linejoin="round" /><polygon points="1122.8,650.0 1128.0,650.0 1128.0,657.0 1122.8,657.0" fill="#007800" stroke="#000" stroke-width="0.5" stroke-linejoin="round" /><polygon points="1132.0,654.0 1142.5,654.0 1142.5,662.0 1132.0,662.0" fill="#009400" stroke="#000" stroke-width="0.8" stroke-linejoin="round" /><polygon points="1137.2,654.0 1142.5,654.0 1142.5,662.0 1137.2,662.0" fill="#007800" stroke="#000" stroke-width="0.5" stroke-linejoin="round" /><polygon points="1150.0,650.6 1161.0,650.6 1161.0,658.0 1150.0,658.0" fill="#009400" stroke="#000" stroke-width="0.8" stroke-linejoin="round" /><polygon points="1155.5,650.6 1161.0,650.6 1161.0,658.0 1155.5,658.0" fill="#007800" stroke="#000" stroke-width="0.5" stroke-linejoin="round" /><polygon points="1265.0,523.7 1293.0,516.5 1313.0,516.2 1290.0,527.0" fill="#6c7870" stroke="#000" stroke-width="0.8" stroke-linejoin="round" /><polygon points="1290.0,527.0 1337.5,514.4 1337.0,532.5 1288.0,553.0" fill="#363c38" stroke="#000" stroke-width="1" stroke-linejoin="round" /><polygon points="1265.0,523.7 1290.0,527.0 1288.0,553.0 1262.0,549.4" fill="#8c9a90" stroke="#000" stroke-width="1.2" stroke-linejoin="round" /><ellipse cx="1293.0" cy="537.5" rx="2.2" ry="6.6" fill="#0c5c30" stroke="#000" stroke-width="0.9" transform="rotate(8 1293.0 537.5)"/><ellipse cx="1292.6" cy="537.8" rx="1.1" ry="5.4" fill="#14f068" stroke="none" stroke-width="0" transform="rotate(8 1292.6 537.8)"/><ellipse cx="1303.5" cy="533.0" rx="2" ry="6" fill="#0c5c30" stroke="#000" stroke-width="0.9" transform="rotate(6 1303.5 533.0)"/><ellipse cx="1303.2" cy="533.2" rx="1" ry="4.8" fill="#14f068" stroke="none" stroke-width="0" transform="rotate(6 1303.2 533.2)"/><path d="M1342.5,503.0 L1377.5,505.6 L1367.0,611.0 Q1349.5,611.5 1332.0,606.0 Z" fill="url(#gy)" stroke="#000" stroke-width="1"/><path d="M1342.4,503.5 Q1357.7,507.6 1376.9,507.3" fill="none" stroke="#000" stroke-width="0.9"/><path d="M1342.2,506.1 Q1357.4,510.2 1376.7,509.9" fill="none" stroke="#000" stroke-width="0.9"/><path d="M1340.6,522.0 Q1355.8,526.1 1375.1,525.8" fill="none" stroke="#000" stroke-width="0.9"/><path d="M1340.3,524.6 Q1355.5,528.7 1374.8,528.4" fill="none" stroke="#000" stroke-width="0.9"/><path d="M1338.3,544.0 Q1353.6,548.1 1372.8,547.8" fill="none" stroke="#000" stroke-width="0.9"/><path d="M1338.1,546.6 Q1353.3,550.7 1372.6,550.4" fill="none" stroke="#000" stroke-width="0.9"/><path d="M1336.2,565.0 Q1351.4,569.1 1370.7,568.8" fill="none" stroke="#000" stroke-width="0.9"/><path d="M1335.9,567.6 Q1351.2,571.7 1370.4,571.4" fill="none" stroke="#000" stroke-width="0.9"/><path d="M1333.9,587.0 Q1349.2,591.1 1368.4,590.8" fill="none" stroke="#000" stroke-width="0.9"/><path d="M1333.7,589.6 Q1348.9,593.7 1368.2,593.4" fill="none" stroke="#000" stroke-width="0.9"/><path d="M1332.0,606.0 Q1347.2,610.1 1366.5,609.8" fill="none" stroke="#000" stroke-width="0.9"/><path d="M1331.7,608.6 Q1347.0,612.7 1366.2,612.4" fill="none" stroke="#000" stroke-width="0.9"/><polygon points="1351.0,644.0 1366.0,635.0 1417.5,650.0 1410.6,652.0 1352.0,648.7" fill="#006400" stroke="#000" stroke-width="1" stroke-linejoin="round" /><polygon points="1352.0,648.7 1410.6,652.0 1407.0,685.0 1358.7,687.5 1353.7,687.5 1347.5,640.0" fill="#005c00" stroke="#000" stroke-width="1" stroke-linejoin="round" /><polygon points="1352.0,648.7 1357.5,649.0 1359.5,687.5 1353.7,687.5" fill="#007400" stroke="#000" stroke-width="0.7" stroke-linejoin="round" /><polygon points="1357.5,649.0 1368.0,649.6 1370.5,686.9 1359.5,687.5" fill="#006c00" stroke="#000" stroke-width="0.7" stroke-linejoin="round" /><polygon points="1410.6,652.0 1417.5,650.6 1414.4,683.0 1407.0,685.0" fill="#007000" stroke="#000" stroke-width="1" stroke-linejoin="round" /><polyline points="1371.0,684.0 1406.0,682.5" fill="none" stroke="#000" stroke-width="0.6" /><g shape-rendering="auto"><g fill="url(#gwm2)"><polygon points="891.0,517.6 893.2,517.0 893.2,539.6 891.0,539.6"/><polygon points="936.1,517.6 933.9,517.0 933.9,539.6 936.1,539.6"/><polygon points="894.7,513.2 897.4,511.8 898.2,516.0 898.2,537.2 894.7,538.0"/><polygon points="932.4,513.2 929.7,511.8 928.9,516.0 928.9,537.2 932.4,538.0"/><polygon points="899.0,509.2 900.6,507.8 902.5,514.0 902.5,534.2 899.0,535.4"/><polygon points="928.1,509.2 926.5,507.8 924.6,514.0 924.6,534.2 928.1,535.4"/><path d="M891,537.6 L893.5,537.6 Q904,534.8 911.5,539.8 L891,539.8Z M936.1,537.6 L933.6,537.6 Q923,534.8 915.5,539.8 L936.1,539.8Z M898,535.5 Q906,533.5 912,538.5 L910,539.5 Q905,536 898,537.2Z M929,535.5 Q921,533.5 915,538.5 L917,539.5 Q922,536 929,537.2Z"/></g><path d="M913.8,510 C906,511 902.5,517 905,522.5 C905.5,524.5 906.5,526 907.2,526.4 C906,521 907.5,517.5 911.5,517.3 L912.3,518 L912.3,538 L914.9,538 L914.9,512.5Z" fill="url(#gwm)"/><path d="M919.6,519 C923.6,522 923.6,528.5 919,532.5 C917,534.5 915.6,536.5 914.8,539.6 L909.5,539.6 Q911,536 912.6,531 C916,530 920,526.5 919.6,519Z" fill="url(#gwm2)"/><text x="946.5" y="528.8" font-family="'Liberation Sans','Noto Sans CJK SC',sans-serif" font-size="16.8" fill="#f4882a" stroke="#f4882a" stroke-width=".3" textLength="83" lengthAdjust="spacingAndGlyphs">智造资料网</text><text x="947" y="538.2" font-family="'Liberation Sans',sans-serif" font-size="4.6" font-weight="bold" font-style="italic" fill="#f4882a" textLength="82" lengthAdjust="spacingAndGlyphs">INTELLIGENT MANUFACTURING DATA</text></g><g shape-rendering="auto"><polygon points="95.4,943.5 118.0,943.5 115.8,967.6 95.4,966.7" fill="rgba(200,208,228,0.35)" stroke="#d8d4cc" stroke-width="0.9" stroke-linejoin="round" /><polyline points="106.5,943.5 104.5,962.5 115.8,967.0" fill="none" stroke="#d8d4cc" stroke-width="0.9" /><polyline points="119.6,944.0 113.3,1001.0" fill="none" stroke="#00e0e8" stroke-width="3" /><polyline points="120.0,940.5 97.0,933.5" fill="none" stroke="#00c800" stroke-width="2" /><ellipse cx="100.5" cy="932.5" rx="3.2" ry="1.8" fill="#00a000" stroke="#00c000" stroke-width="1"/><polyline points="108.0,938.3 85.0,936.4" fill="none" stroke="#f0f000" stroke-width="1.3" /><polygon points="89.0,941.7 99.5,937.0 99.5,946.0" fill="#e00000" stroke="#c00000" stroke-width="0.6" stroke-linejoin="round" /><polyline points="99.0,941.7 118.0,941.7" fill="none" stroke="#c80000" stroke-width="2.4" /><ellipse cx="120.6" cy="941.7" rx="3.6" ry="3.8" fill="#787878" stroke="#606060" stroke-width="0.6"/><text x="83" y="945.6" font-family="Liberation Sans,sans-serif" font-size="11.5" style="font-weight:300" text-anchor="middle" fill="#f0f0f0">X</text><text x="91.4" y="935.6" font-family="Liberation Sans,sans-serif" font-size="11.5" text-anchor="middle" fill="#f00000">Y</text></g></svg><div class="vb" style="left:4px;top:4px"><svg class="abs" style="left:0px;top:0px" width="24" height="24" viewBox="0 0 24 24" ><rect x="3" y="4.5" width="18" height="3.6" fill="#40588c"/><rect x="3" y="10.2" width="18" height="3.6" fill="#40588c"/><rect x="3" y="15.9" width="18" height="3.6" fill="#40588c"/><path d="M4,6.3h16M4,12h16M4,17.7h16" stroke="#6c84b8" stroke-width=".8"/></svg></div><div class="vb" style="left:32px;top:4px"><svg class="abs" style="left:0px;top:0px" width="24" height="24" viewBox="0 0 24 24" ><defs><linearGradient id="fg" x1="0" y1="0" x2="1" y2="1"><stop offset="0" stop-color="#ffffff"/><stop offset="1" stop-color="#b8d0f4"/></linearGradient></defs><rect x="6.5" y="7" width="11.5" height="10.5" fill="url(#fg)" stroke="#a8b8d8" stroke-width=".6"/><path d="M3.5,4l3,3M20.5,4l-3,3M3.5,20.5l3,-3M20.5,20.5l-3,-3" stroke="#40c828" stroke-width="1.8"/><path d="M2.6,5.6v-2.6h2.6M21.4,5.6v-2.6h-2.6M2.6,19v2.6h2.6M21.4,19v2.6h-2.6" stroke="#40c828" stroke-width="1.3" fill="none"/></svg></div><div class="vb" style="left:60px;top:4px"><svg class="abs" style="left:0px;top:0px" width="24" height="24" viewBox="0 0 24 24" ><path d="M10.5,15 L5.5,21" stroke="#8c8c94" stroke-width="3.2" stroke-linecap="round"/><path d="M10.5,15 L5.5,21" stroke="#d8d8e0" stroke-width="1.4" stroke-linecap="round"/><circle cx="14" cy="11" r="6.2" fill="#cfe0f6" stroke="#7888a8" stroke-width="1.6"/><circle cx="12.8" cy="9.6" r="2.79" fill="#f4f8ff" opacity=".9"/><path d="M5,6l4,2.2M4.5,9.5l3.5,1.5M5.5,13l3,.8" stroke="#c0d4f0" stroke-width="1.2"/></svg></div><div class="vb" style="left:88px;top:4px"><svg class="abs" style="left:0px;top:0px" width="24" height="24" viewBox="0 0 24 24" ><path d="M2,15L11,11L21,15.5L11,20z" fill="none" stroke="#606880" stroke-width=".6"/><path d="M11,15.5V4" stroke="#2080f0" stroke-width="1.8"/><path d="M11,1.5l-2.4,4h4.8z" fill="#2080f0"/><path d="M11,15.5L19,10" stroke="#30c030" stroke-width="1.5"/><path d="M21,8.6l-4.2,.6l2.3,3z" fill="#30c030"/><path d="M11,15.5L18.5,20" stroke="#e02020" stroke-width="1.5"/><path d="M20.5,21.5l-4.2,-.8l2.2,-3z" fill="#e02020"/><circle cx="11" cy="15.5" r="1.7" fill="#f0f0f0" stroke="#505050" stroke-width=".5"/></svg></div><div class="vb" style="left:116px;top:4px"><svg class="abs" style="left:0px;top:0px" width="24" height="24" viewBox="0 0 24 24" ><defs><linearGradient id="vg" x1="0" y1="0" x2="1" y2="1"><stop offset="0" stop-color="#58e048"/><stop offset="1" stop-color="#1ca010"/></linearGradient></defs><path d="M3.8,5.6L12.3,3.0L22.3,6.0L13.3,8.8z" fill="url(#vg)"/><path d="M3.8,5.6L12.3,3.0L22.3,6.0L13.3,8.8zM3.8,16.8L12.3,13.3L22.3,17.4L12.8,21.4zM3.8,5.6L3.8,16.8M12.3,3.0L12.3,13.3M22.3,6.0L22.3,17.4M13.3,8.8L12.8,21.4" fill="none" stroke="#000" stroke-width="1.05" stroke-linejoin="round"/></svg></div><div class="vb" style="left:144px;top:4px"><svg class="abs" style="left:0px;top:0px" width="24" height="24" viewBox="0 0 24 24" ><defs><linearGradient id="vg" x1="0" y1="0" x2="1" y2="1"><stop offset="0" stop-color="#58e048"/><stop offset="1" stop-color="#1ca010"/></linearGradient></defs><path d="M3.8,16.8L12.3,13.3L22.3,17.4L12.8,21.4z" fill="url(#vg)"/><path d="M3.8,5.6L12.3,3.0L22.3,6.0L13.3,8.8zM3.8,16.8L12.3,13.3L22.3,17.4L12.8,21.4zM3.8,5.6L3.8,16.8M12.3,3.0L12.3,13.3M22.3,6.0L22.3,17.4M13.3,8.8L12.8,21.4" fill="none" stroke="#000" stroke-width="1.05" stroke-linejoin="round"/></svg></div><div class="vb" style="left:172px;top:4px"><svg class="abs" style="left:0px;top:0px" width="24" height="24" viewBox="0 0 24 24" ><defs><linearGradient id="vg" x1="0" y1="0" x2="1" y2="1"><stop offset="0" stop-color="#58e048"/><stop offset="1" stop-color="#1ca010"/></linearGradient></defs><path d="M3.8,5.6L12.3,3.0L12.3,13.3L3.8,16.8z" fill="url(#vg)"/><path d="M3.8,5.6L12.3,3.0L22.3,6.0L13.3,8.8zM3.8,16.8L12.3,13.3L22.3,17.4L12.8,21.4zM3.8,5.6L3.8,16.8M12.3,3.0L12.3,13.3M22.3,6.0L22.3,17.4M13.3,8.8L12.8,21.4" fill="none" stroke="#000" stroke-width="1.05" stroke-linejoin="round"/></svg></div><div class="vb" style="left:200px;top:4px"><svg class="abs" style="left:0px;top:0px" width="24" height="24" viewBox="0 0 24 24" ><defs><linearGradient id="vg" x1="0" y1="0" x2="1" y2="1"><stop offset="0" stop-color="#58e048"/><stop offset="1" stop-color="#1ca010"/></linearGradient></defs><path d="M13.3,8.8L22.3,6.0L22.3,17.4L12.8,21.4z" fill="url(#vg)"/><path d="M3.8,5.6L12.3,3.0L22.3,6.0L13.3,8.8zM3.8,16.8L12.3,13.3L22.3,17.4L12.8,21.4zM3.8,5.6L3.8,16.8M12.3,3.0L12.3,13.3M22.3,6.0L22.3,17.4M13.3,8.8L12.8,21.4" fill="none" stroke="#000" stroke-width="1.05" stroke-linejoin="round"/></svg></div><div class="vb" style="left:228px;top:4px"><svg class="abs" style="left:0px;top:0px" width="24" height="24" viewBox="0 0 24 24" ><defs><linearGradient id="vg" x1="0" y1="0" x2="1" y2="1"><stop offset="0" stop-color="#58e048"/><stop offset="1" stop-color="#1ca010"/></linearGradient></defs><path d="M3.8,5.6L13.3,8.8L12.8,21.4L3.8,16.8z" fill="url(#vg)"/><path d="M3.8,5.6L12.3,3.0L22.3,6.0L13.3,8.8zM3.8,16.8L12.3,13.3L22.3,17.4L12.8,21.4zM3.8,5.6L3.8,16.8M12.3,3.0L12.3,13.3M22.3,6.0L22.3,17.4M13.3,8.8L12.8,21.4" fill="none" stroke="#000" stroke-width="1.05" stroke-linejoin="round"/></svg></div><div class="vb" style="left:256px;top:4px"><svg class="abs" style="left:0px;top:0px" width="24" height="24" viewBox="0 0 24 24" ><defs><linearGradient id="vg" x1="0" y1="0" x2="1" y2="1"><stop offset="0" stop-color="#58e048"/><stop offset="1" stop-color="#1ca010"/></linearGradient></defs><path d="M12.3,3.0L22.3,6.0L22.3,17.4L12.3,13.3z" fill="url(#vg)"/><path d="M3.8,5.6L12.3,3.0L22.3,6.0L13.3,8.8zM3.8,16.8L12.3,13.3L22.3,17.4L12.8,21.4zM3.8,5.6L3.8,16.8M12.3,3.0L12.3,13.3M22.3,6.0L22.3,17.4M13.3,8.8L12.8,21.4" fill="none" stroke="#000" stroke-width="1.05" stroke-linejoin="round"/></svg></div><div class="vb" style="left:284px;top:4px"><svg class="abs" style="left:0px;top:0px" width="24" height="24" viewBox="0 0 24 24" ><path d="M3.8,5.6L12.3,3.0L22.3,6.0L13.3,8.8z" fill="#60e850" stroke="#30b820" stroke-width=".6"/><path d="M3.8,5.6L13.3,8.8L12.8,21.4L3.8,16.8z" fill="#34cc24" stroke="#30b820" stroke-width=".6"/><path d="M13.3,8.8L22.3,6.0L22.3,17.4L12.8,21.4z" fill="#189810" stroke="#30b820" stroke-width=".6"/></svg></div><div class="vb" style="left:4px;top:32px;"><svg class="abs" style="left:0px;top:0px" width="24" height="24" viewBox="0 0 24 24" ><g transform="translate(1.6,.6)"><path d="M7,5.5 V18 a5,2 0 0 0 10,0 V5.5" fill="none" stroke="#18181c" stroke-width="1"/><path d="M7,5.5 a5,2 0 1 0 10,0 a5,2 0 1 0 -10,0" fill="none" stroke="#18181c" stroke-width="1"/><path d="M7,18 a5,2 0 0 1 10,0" fill="none" stroke="#18181c" stroke-width=".8"/></g></svg></div><div class="vb" style="left:4px;top:60px;"><svg class="abs" style="left:0px;top:0px" width="24" height="24" viewBox="0 0 24 24" ><g transform="translate(1.6,.6)"><path d="M7,5.5 V18 a5,2 0 0 0 10,0 V5.5" fill="none" stroke="#18181c" stroke-width="1"/><path d="M7,5.5 a5,2 0 1 0 10,0 a5,2 0 1 0 -10,0" fill="none" stroke="#18181c" stroke-width="1"/><path d="M7,18 a5,2 0 0 1 10,0" fill="none" stroke="#18181c" stroke-width=".8"/></g></svg></div><div class="vb" style="left:4px;top:88px;background:#b49c5c;border:1px solid #f0cc60"><svg class="abs" style="left:-1px;top:-1px" width="24" height="24" viewBox="0 0 24 24" ><g transform="translate(1.6,.6)"><defs><linearGradient id="cb" x1="0" x2="1"><stop offset="0" stop-color="#7aa0e0"/><stop offset=".4" stop-color="#4870c0"/><stop offset="1" stop-color="#1c3478"/></linearGradient></defs><path d="M7,5.5 V18 a5,2 0 0 0 10,0 V5.5" fill="url(#cb)" stroke="#101c48" stroke-width=".9"/><path d="M7,5.5 a5,2 0 1 0 10,0 a5,2 0 1 0 -10,0" fill="#b8d0f4" stroke="#101c48" stroke-width=".9"/></g></svg></div><div class="vb" style="left:4px;top:116px;"><svg class="abs" style="left:0px;top:0px" width="24" height="24" viewBox="0 0 24 24" ><g transform="translate(1.6,.6)"><defs><linearGradient id="cl" x1="0" x2="1"><stop offset="0" stop-color="#f4f6fc"/><stop offset="1" stop-color="#b8c4e0"/></linearGradient></defs><path d="M7,5.5 V18 a5,2 0 0 0 10,0 V5.5" fill="url(#cl)" stroke="#5c6484" stroke-width=".9"/><path d="M7,5.5 a5,2 0 1 0 10,0 a5,2 0 1 0 -10,0" fill="#f8faff" stroke="#5c6484" stroke-width=".9"/></g></svg></div><div class="vb" style="left:4px;top:144px;"><svg class="abs" style="left:0px;top:0px" width="24" height="24" viewBox="0 0 24 24" ><g transform="translate(1.6,.6)"><path d="M7,5.5 V18 a5,2 0 0 0 10,0 V5.5" fill="#8c94ac" stroke="#18181c" stroke-width=".9"/><path d="M7,5.5 a5,2 0 1 0 10,0 a5,2 0 1 0 -10,0" fill="#9aa2b8" stroke="#18181c" stroke-width=".9"/><path d="M9,7.2L11,19.8M12,7.5L9.5,19.5M12,7.5L14.5,19.5M15,7.2L13,19.8M7,12q5,3 10,0" fill="none" stroke="#18181c" stroke-width=".7"/></g></svg></div><svg width="220" height="140" viewBox="1700 780 220 140" style="position:absolute;left:1640px;top:671px"><defs><linearGradient id="ring59" x1="0" y1="1" x2="1" y2="0"><stop offset="0" stop-color="#e8d838"/><stop offset=".5" stop-color="#70d880"/><stop offset="1" stop-color="#38d0d8"/></linearGradient></defs><rect x="1747" y="794" width="157" height="69.5" rx="9" fill="#b8d8ec" stroke="#7ab4d8" stroke-width="1"/><path d="M1750,796 H1900 Q1903,797 1903,800 H1750Z" fill="#1c8cc8"/><rect x="1731.5" y="800" width="170" height="58.5" rx="8" fill="#fff" stroke="#1080c0" stroke-width="1.2"/><text x="1752.5" y="824.5" font-family="Liberation Sans,sans-serif" font-size="22" font-weight="bold" text-anchor="middle" fill="#000">A</text><circle cx="1780.5" cy="818.7" r="8" fill="#000"/><circle cx="1778" cy="816.4" r="7.2" fill="#fff"/><path d="M1746,837q1.6,.6 .4,3.4l-1,-.4q.8,-1.4 .6,-3z" fill="#000"/><circle cx="1759" cy="850.5" r=".9" fill="#000"/><path d="M1772,838.5l4.5,-1q3.5,2.4 7,0l4.5,1l3,4l-3,2.6l-1.6,-1.4v9h-13v-9l-1.6,1.4l-3,-2.6z" fill="#000"/><circle cx="1893.5" cy="822" r="5" fill="#e00828"/><path d="M1858,826 Q1880,818 1896,840 Q1916,842 1916,856 Q1912,864 1896,861 L1840,862 Q1815,862 1809,850 Q1806,840 1812,834Z" fill="#0c98e4" stroke="#0868a8" stroke-width=".6"/><ellipse cx="1906" cy="852" rx="11" ry="9.5" fill="#fff" stroke="#c8c0b8" stroke-width=".6" transform="rotate(35 1906 852)"/><path d="M1822,851 Q1845,858 1868,846" fill="none" stroke="#d01818" stroke-width="2.4"/><circle cx="1834" cy="858" r="3.6" fill="#f0c818" stroke="#a08000" stroke-width=".5"/><circle cx="1840" cy="827.5" r="33" fill="#0c98e4" stroke="#0868a8" stroke-width=".6"/><ellipse cx="1836" cy="832" rx="29" ry="24.5" fill="#fff" stroke="#b8b0a8" stroke-width=".5" transform="rotate(-8 1836 832)"/><ellipse cx="1834" cy="808" rx="7.5" ry="9" fill="#fff" stroke="#806860" stroke-width=".7" transform="rotate(-15 1834 808)"/><ellipse cx="1848" cy="811" rx="7.5" ry="9" fill="#fff" stroke="#806860" stroke-width=".7" transform="rotate(-5 1848 811)"/><path d="M1832,806q3,4 7,1" fill="none" stroke="#201818" stroke-width="1"/><ellipse cx="1844" cy="810.5" rx="1.8" ry="2.4" fill="#100808"/><circle cx="1844.3" cy="810" r=".7" fill="#fff"/><circle cx="1835.5" cy="814" r="4.6" fill="#e8102c"/><circle cx="1836.4" cy="813" r="1.5" fill="#fff"/><path d="M1835,819 Q1832,834 1826,838" fill="none" stroke="#705850" stroke-width=".6"/><path d="M1810,826 Q1830,848 1862,834" fill="none" stroke="#705850" stroke-width=".7"/><path d="M1810,811l13,5M1808,818l14,2M1812,808l12,9M1842,823l18,-2M1841,827l18,5M1840,830l16,11" stroke="#705850" stroke-width=".5" fill="none"/><ellipse cx="1814" cy="841" rx="7.5" ry="7" fill="#fff" stroke="#b0a8a0" stroke-width=".6"/><ellipse cx="1848" cy="853" rx="8.5" ry="7" fill="#fff" stroke="#b0a8a0" stroke-width=".6"/><rect x="1826" y="863" width="77.5" height="40.5" rx="20" fill="#222a3c"/><path d="M1842,882.7h61" stroke="#343c50" stroke-width="1"/><circle cx="1813.4" cy="883.5" r="29" fill="#2a3146" stroke="#3a4258" stroke-width="1"/><circle cx="1813.4" cy="883.5" r="24.5" fill="#343c54"/><path d="M1813.4,856.6 A27,27 0 1 1 1800,907" fill="none" stroke="url(#ring59)" stroke-width="1.6"/><text x="1797" y="891" font-family="Liberation Sans,sans-serif" font-size="23" fill="#f0f2f8" stroke="#343c54" stroke-width="1" textLength="26" lengthAdjust="spacingAndGlyphs">59</text><text x="1824" y="890.5" font-family="Liberation Sans,sans-serif" font-size="10" fill="#f0f2f8" stroke="#343c54" stroke-width=".4">%</text><path d="M1849.5,875v-6M1846.8,871.3l2.7,-2.8l2.7,2.8" fill="none" stroke="#40a8f0" stroke-width="1.2"/><path d="M1849.5,889v6M1846.8,892.7l2.7,2.8l2.7,-2.8" fill="none" stroke="#28c840" stroke-width="1.2"/><text x="1872" y="876.5" font-family="Liberation Sans,sans-serif" font-size="9.5" font-weight="bold" fill="#f4f6fa">0</text><text x="1879.5" y="876.5" font-family="Liberation Sans,sans-serif" font-size="7.6" fill="#e0e4ec">K/s</text><text x="1872" y="897.5" font-family="Liberation Sans,sans-serif" font-size="9.5" font-weight="bold" fill="#f4f6fa">0</text><text x="1879.5" y="897.5" font-family="Liberation Sans,sans-serif" font-size="7.6" fill="#e0e4ec">K/s</text></svg></div>
<div id="title"><svg class="abs" style="left:2px;top:3px" width="16" height="16" viewBox="0 0 16 16" ><rect x="0" y="0" width="16" height="15.5" fill="#5cb82c"/><rect x="1" y="1" width="14" height="13.5" fill="#74cc40"/><text x="8" y="13.2" font-family="Liberation Sans,sans-serif" font-size="14" font-weight="bold" text-anchor="middle" fill="#fff">V</text></svg><div class="abs" style="left:20px;top:4px;width:1px;height:14px;background:#b0b0b0"></div><svg class="abs" style="left:30.0px;top:2.5px" width="19" height="19" viewBox="0 0 24 24" ><path d="M6,2h9l4,4v16h-13z" fill="#fff" stroke="#404040" stroke-width="1.2"/><path d="M15,2v4h4" fill="#d8d8d8" stroke="#404040" stroke-width="1"/><path d="M8,20h9v-10" stroke="#b0c4ec" stroke-width="2" fill="none"/></svg><svg class="abs" style="left:54.5px;top:2.5px" width="19" height="19" viewBox="0 0 24 24" ><path d="M2,8h7l2,2h9v11h-18z" fill="#e8b838" stroke="#a07818" stroke-width=".8"/><path d="M2,21l3,-8h17l-3,8z" fill="#f8d868" stroke="#a07818" stroke-width=".8"/><path d="M10,7q3,-5 8,-2l1.5,-2l1,6l-6,-.5l1.8,-1.6q-3,-2 -5,.6z" fill="#30a830" stroke="#187018" stroke-width=".5"/></svg><svg class="abs" style="left:77.5px;top:2.5px" width="19" height="19" viewBox="0 0 24 24" ><path d="M2,6h6l2,2h6v12h-14z" fill="#e8c050" stroke="#a07818" stroke-width=".8"/><path d="M11,4h7l3,3v14h-10z" fill="#f8f8fc" stroke="#606880" stroke-width=".9"/><path d="M13,10h6M13,13h6M13,16h6" stroke="#a0a8c0" stroke-width=".9"/></svg><svg class="abs" style="left:101.5px;top:2.5px" width="19" height="19" viewBox="0 0 24 24" ><path d="M2,2h18l2,2v18h-20z" fill="#3c4c9c" stroke="#182058" stroke-width=".8"/><rect x="4.5" y="2.5" width="14" height="9" fill="#fff"/><rect x="4.5" y="2.5" width="14" height="2.2" fill="#e84040"/><path d="M5,7h13M5,9.5h13" stroke="#b0b4c8" stroke-width=".8"/><rect x="6" y="14" width="12" height="8" fill="#d0d4e0"/><rect x="8" y="15.5" width="3" height="5" fill="#3c4c9c"/></svg><svg class="abs" style="left:125.5px;top:2.5px" width="19" height="19" viewBox="0 0 24 24" ><g transform="translate(6,1) scale(.7)"><path d="M2,2h18l2,2v18h-20z" fill="#3c4c9c" stroke="#182058" stroke-width=".8"/><rect x="4.5" y="2.5" width="14" height="9" fill="#fff"/><rect x="4.5" y="2.5" width="14" height="2.2" fill="#e84040"/><path d="M5,7h13M5,9.5h13" stroke="#b0b4c8" stroke-width=".8"/><rect x="6" y="14" width="12" height="8" fill="#d0d4e0"/><rect x="8" y="15.5" width="3" height="5" fill="#3c4c9c"/></g><g transform="translate(0,8) scale(.65)"><path d="M2,2h18l2,2v18h-20z" fill="#3c4c9c" stroke="#182058" stroke-width=".8"/><rect x="4.5" y="2.5" width="14" height="9" fill="#fff"/><rect x="4.5" y="2.5" width="14" height="2.2" fill="#e84040"/><path d="M5,7h13M5,9.5h13" stroke="#b0b4c8" stroke-width=".8"/><rect x="6" y="14" width="12" height="8" fill="#d0d4e0"/><rect x="8" y="15.5" width="3" height="5" fill="#3c4c9c"/></g></svg><svg class="abs" style="left:150.5px;top:2.5px" width="19" height="19" viewBox="0 0 24 24" ><g transform="translate(1,1) scale(.62)"><path d="M2,2h18l2,2v18h-20z" fill="#3c4c9c" stroke="#182058" stroke-width=".8"/><rect x="4.5" y="2.5" width="14" height="9" fill="#fff"/><rect x="4.5" y="2.5" width="14" height="2.2" fill="#e84040"/><path d="M5,7h13M5,9.5h13" stroke="#b0b4c8" stroke-width=".8"/><rect x="6" y="14" width="12" height="8" fill="#d0d4e0"/><rect x="8" y="15.5" width="3" height="5" fill="#3c4c9c"/></g><path d="M12,13l6,-3l5,2.5l-6,3z" fill="#c8c8c8" stroke="#404040" stroke-width=".6"/><path d="M12,13l5,2.5v7l-5,-2.5z" fill="#909090" stroke="#404040" stroke-width=".6"/><path d="M23,12.5l-6,3v7l6,-3z" fill="#606060" stroke="#404040" stroke-width=".6"/><path d="M17,3q4,0 4,5l2,-1l-3,4l-3,-4l2,.6q0,-3 -2,-3.6z" fill="#30a830"/></svg><svg class="abs" style="left:174.5px;top:2.5px" width="19" height="19" viewBox="0 0 24 24" ><rect x="5" y="2" width="14" height="11" fill="#f8f8fc" stroke="#505868" stroke-width=".8"/><path d="M12,11v-6M9.5,7.5l2.5,-3l2.5,3" stroke="#28a028" stroke-width="1.8" fill="none"/><path d="M2,12h20v8h-20z" fill="#c8ccd8" stroke="#505868" stroke-width=".8"/><rect x="4" y="18" width="16" height="4" fill="#e8e8f0" stroke="#505868" stroke-width=".7"/><rect x="16" y="14" width="3" height="1.6" fill="#30c030"/></svg><svg class="abs" style="left:198.5px;top:2.5px" width="19" height="19" viewBox="0 0 24 24" ><circle cx="12" cy="12" r="10.5" fill="#80982c" stroke="#586818" stroke-width="1"/><circle cx="12" cy="11" r="6.8" fill="#cfe0f6" stroke="#8090a8" stroke-width="1.4"/><circle cx="10.5" cy="9.5" r="3" fill="#f4f8ff"/><path d="M16.5,16l4,4.5" stroke="#606870" stroke-width="2.6"/></svg><svg class="abs" style="left:222.5px;top:2.5px" width="19" height="19" viewBox="0 0 24 24" ><path d="M3,10l8,-7v4.5q10,0 9,12q-2,-6.5 -9,-6.5v4.5z" fill="#909090" stroke="#585858" stroke-width=".8"/></svg><svg class="abs" style="left:244.5px;top:2.5px" width="19" height="19" viewBox="0 0 24 24" ><path d="M21,10l-8,-7v4.5q-10,0 -9,12q2,-6.5 9,-6.5v4.5z" fill="#909090" stroke="#585858" stroke-width=".8"/></svg><svg class="abs" style="left:269.5px;top:2.5px" width="19" height="19" viewBox="0 0 24 24" ><path d="M4,9l7,-6v4q10,0 9,11q-2,-6 -9,-6v4z" fill="#5c94e0" stroke="#2c58a8" stroke-width=".8"/><path d="M3,11h8l-2.6,5l2.6,5.5h-8l2.6,-5.5z" fill="#c8a038" stroke="#705010" stroke-width=".8"/></svg><svg class="abs" style="left:294px;top:8px" width="10" height="8" viewBox="0 0 10 8" ><path d="M0,0h7M0.5,3h6l-3,3.5z" fill="#000" stroke="#000" stroke-width="1"/></svg><div class="abs" style="left:311px;top:4px;width:1px;height:15px;background:#a0a0a0"></div><svg class="abs" style="left:1795px;top:0px" width="120" height="23" viewBox="0 0 120 23" shape-rendering="crispEdges"><path d="M4.5,11.5h10" stroke="#000" stroke-width="1"/><path d="M49.5,8.5h7v7h-7zM51.5,8.5v-2h7v7h-2" fill="none" stroke="#000" stroke-width="1"/><path d="M95,5.5l10,10M105,5.5l-10,10" stroke="#000" stroke-width="1.1"/></svg><div class="t">VISI 2018 R2 from Vero Software x64 - Box.wkf - [动态的]</div></div>
<div id="menu"><span style="left:7px">文件</span><span style="left:45px">编辑</span><span style="left:83px">线架构</span><span style="left:133px">点云</span><span style="left:171px">网格</span><span style="left:209px">曲面</span><span style="left:247px">实体编辑</span><span style="left:309px">建模</span><span style="left:347px">分析</span><span style="left:385px">电极</span><span style="left:423px">尺寸标注</span><span style="left:485px">工程图</span><span style="left:535px">系统</span><span style="left:573px">视窗</span><span style="left:611px">加工</span><span style="left:649px">塑模</span><span style="left:687px">冲模</span><span style="left:725px">标准件</span><span style="left:775px">模流分析</span><span style="left:837px">?</span></div>
<div id="strip1"></div><div id="tb"></div><div id="strip2"></div>
<div class="tab" style="left:12.5px;width:18px;background:#f4f6fc"><svg width="10" height="6" style="position:absolute;left:3px;top:7px"><path d="M0 0h9l-4.5 5z" fill="#000"/></svg></div><div class="tab act" style="left:30.5px;width:35.5px">标准</div><div class="tab" style="left:65px;width:34.7px">编辑</div><div class="tab" style="left:98.7px;width:47.0px">线架构</div><div class="tab" style="left:144.7px;width:34.6px">建模</div><div class="tab" style="left:178.3px;width:35.0px">曲面</div><div class="tab" style="left:212.3px;width:35.0px">尺寸</div><div class="tab" style="left:246.3px;width:35.0px">应用</div><div class="tab" style="left:280.3px;width:35.0px">塑膜</div><div class="tab" style="left:314.3px;width:34.7px">冲模</div><div class="tab" style="left:348px;width:35.0px">加工</div><div class="tab" style="left:382px;width:35.0px">模流</div>
<div id="tbrow"></div>
<svg class="abs" style="left:21px;top:67px" width="24" height="24" viewBox="0 0 24 24" ><path d="M3,3h10l2,2.2h-10zM3,6.2h10l2,2.2h-10zM3,9.4h10l2,2.2h-10z" fill="#90a8e0" stroke="#5068b0" stroke-width=".5"/><ellipse cx="11.5" cy="16.5" rx="7.5" ry="4.6" fill="#c89c78" stroke="#705038" stroke-width=".7"/><circle cx="8" cy="17" r="1.7" fill="#1840e0"/><circle cx="12" cy="18.3" r="1.7" fill="#18b018"/><circle cx="15.5" cy="16" r="1.7" fill="#e01818"/><path d="M20.5,3.5L13,14.5" stroke="#a86828" stroke-width="2"/><path d="M13.6,13.4l-1.6,3l2.8,-2z" fill="#302010"/></svg><svg class="abs" style="left:46px;top:67px" width="24" height="24" viewBox="0 0 24 24" ><path d="M6,3h9l3,3v12h-12z" fill="#f4f6fc" stroke="#5c6890" stroke-width=".8"/><path d="M9,1.5h9l3,3v12h-3" fill="#dce4f8" stroke="#5c6890" stroke-width=".8"/><rect x="7.5" y="6" width="7" height="7" fill="#88a8e0"/><g transform="translate(-1 9.5) scale(0.95)"><path d="M4,3.2l-1.2,-1.6M7,1.8l-.8,-1.6M10.5,1.2l-.2,-1.4M14,1.4l.5,-1.4M17,2.6l1.2,-1.4M19.5,4.6l1.6,-1" stroke="#3a4466" stroke-width=".9" fill="none"/><path d="M1,9.5 Q5,1.2 12,1.4 Q18.5,1.6 22,8.5 Q17,4.6 11.5,4.8 Q5.5,5 1,9.5Z" fill="#3a4668"/><path d="M2.5,9.6 Q11.5,1.8 21,8.6 Q12,14 2.5,9.6Z" fill="#b4c0da" stroke="#5a6488" stroke-width=".5"/><circle cx="11.8" cy="7.4" r="3.7" fill="#4a6296"/><circle cx="11.8" cy="7.4" r="1.7" fill="#141c34"/><circle cx="10.4" cy="6.2" r=".9" fill="#e8f0ff"/><path d="M3,10.6 Q11.5,15.4 20.5,9.6" fill="none" stroke="#b090a0" stroke-width=".9"/></g></svg><svg class="abs" style="left:72px;top:67px" width="24" height="24" viewBox="0 0 24 24" ><g transform="translate(0 1) scale(1)"><path d="M4,3.2l-1.2,-1.6M7,1.8l-.8,-1.6M10.5,1.2l-.2,-1.4M14,1.4l.5,-1.4M17,2.6l1.2,-1.4M19.5,4.6l1.6,-1" stroke="#3a4466" stroke-width=".9" fill="none"/><path d="M1,9.5 Q5,1.2 12,1.4 Q18.5,1.6 22,8.5 Q17,4.6 11.5,4.8 Q5.5,5 1,9.5Z" fill="#3a4668"/><path d="M2.5,9.6 Q11.5,1.8 21,8.6 Q12,14 2.5,9.6Z" fill="#b4c0da" stroke="#5a6488" stroke-width=".5"/><circle cx="11.8" cy="7.4" r="3.7" fill="#4a6296"/><circle cx="11.8" cy="7.4" r="1.7" fill="#141c34"/><circle cx="10.4" cy="6.2" r=".9" fill="#e8f0ff"/><path d="M3,10.6 Q11.5,15.4 20.5,9.6" fill="none" stroke="#b090a0" stroke-width=".9"/></g><path d="M2,16.5H10M6,12.5V20.5" stroke="#6cd41c" stroke-width="2.8" fill="none"/><path d="M14,13.5h4.5m-4.5,0l-1,3q4,-1.5 4.5,1.5q0,3 -4.5,2.5" stroke="#3c78d8" stroke-width="1.5" fill="none"/></svg><svg class="abs" style="left:98px;top:67px" width="24" height="24" viewBox="0 0 24 24" ><g transform="translate(0 1) scale(1)"><path d="M4,3.2l-1.2,-1.6M7,1.8l-.8,-1.6M10.5,1.2l-.2,-1.4M14,1.4l.5,-1.4M17,2.6l1.2,-1.4M19.5,4.6l1.6,-1" stroke="#3a4466" stroke-width=".9" fill="none"/><path d="M1,9.5 Q5,1.2 12,1.4 Q18.5,1.6 22,8.5 Q17,4.6 11.5,4.8 Q5.5,5 1,9.5Z" fill="#3a4668"/><path d="M2.5,9.6 Q11.5,1.8 21,8.6 Q12,14 2.5,9.6Z" fill="#b4c0da" stroke="#5a6488" stroke-width=".5"/><circle cx="11.8" cy="7.4" r="3.7" fill="#4a6296"/><circle cx="11.8" cy="7.4" r="1.7" fill="#141c34"/><circle cx="10.4" cy="6.2" r=".9" fill="#e8f0ff"/><path d="M3,10.6 Q11.5,15.4 20.5,9.6" fill="none" stroke="#b090a0" stroke-width=".9"/></g><path d="M1.5999999999999996,16.5H10.4" stroke="#ece400" stroke-width="2.8" fill="none"/><path d="M14,13.5h4.5m-4.5,0l-1,3q4,-1.5 4.5,1.5q0,3 -4.5,2.5" stroke="#3c78d8" stroke-width="1.5" fill="none"/></svg><svg class="abs" style="left:124px;top:67px" width="24" height="24" viewBox="0 0 24 24" ><g transform="translate(0 0) scale(1)"><path d="M4,3.2l-1.2,-1.6M7,1.8l-.8,-1.6M10.5,1.2l-.2,-1.4M14,1.4l.5,-1.4M17,2.6l1.2,-1.4M19.5,4.6l1.6,-1" stroke="#3a4466" stroke-width=".9" fill="none"/><path d="M1,9.5 Q5,1.2 12,1.4 Q18.5,1.6 22,8.5 Q17,4.6 11.5,4.8 Q5.5,5 1,9.5Z" fill="#3a4668"/><path d="M2.5,9.6 Q11.5,1.8 21,8.6 Q12,14 2.5,9.6Z" fill="#b4c0da" stroke="#5a6488" stroke-width=".5"/><circle cx="11.8" cy="7.4" r="3.7" fill="#4a6296"/><circle cx="11.8" cy="7.4" r="1.7" fill="#141c34"/><circle cx="10.4" cy="6.2" r=".9" fill="#e8f0ff"/><path d="M3,10.6 Q11.5,15.4 20.5,9.6" fill="none" stroke="#b090a0" stroke-width=".9"/></g><rect x="4" y="8.5" width="5" height="11.5" rx="2" fill="#181818"/><circle cx="6.5" cy="11.5" r="1.9" fill="#f0c000"/><circle cx="6.5" cy="16.7" r="1.9" fill="#18c018"/><rect x="14.5" y="8.5" width="5" height="11.5" rx="2" fill="#181818"/><circle cx="17.0" cy="11.5" r="1.9" fill="#e81010"/><circle cx="17.0" cy="16.7" r="1.9" fill="#f0c000"/></svg><svg class="abs" style="left:150px;top:67px" width="24" height="24" viewBox="0 0 24 24" ><g transform="translate(0 0) scale(1)"><path d="M4,3.2l-1.2,-1.6M7,1.8l-.8,-1.6M10.5,1.2l-.2,-1.4M14,1.4l.5,-1.4M17,2.6l1.2,-1.4M19.5,4.6l1.6,-1" stroke="#3a4466" stroke-width=".9" fill="none"/><path d="M1,9.5 Q5,1.2 12,1.4 Q18.5,1.6 22,8.5 Q17,4.6 11.5,4.8 Q5.5,5 1,9.5Z" fill="#3a4668"/><path d="M2.5,9.6 Q11.5,1.8 21,8.6 Q12,14 2.5,9.6Z" fill="#b4c0da" stroke="#5a6488" stroke-width=".5"/><circle cx="11.8" cy="7.4" r="3.7" fill="#4a6296"/><circle cx="11.8" cy="7.4" r="1.7" fill="#141c34"/><circle cx="10.4" cy="6.2" r=".9" fill="#e8f0ff"/><path d="M3,10.6 Q11.5,15.4 20.5,9.6" fill="none" stroke="#b090a0" stroke-width=".9"/></g><path d="M5.5,14.5 A6.5,6.5 0 0 1 17.0,11.5 l1.8,-2.6 l1,7 l-6.6,-.6 l2,-2 A3.5,3.5 0 0 0 8.9,15.0z" fill="#a8d820" stroke="#507808" stroke-width=".6"/><path d="M18.5,16.5 A6.5,6.5 0 0 1 7.0,19.5 l-1.8,2.6 l-1,-7 l6.6,.6 l-2,2 A3.5,3.5 0 0 0 15.1,16.0z" fill="#a8d820" stroke="#507808" stroke-width=".6"/></svg><svg class="abs" style="left:176px;top:67px" width="24" height="24" viewBox="0 0 24 24" ><g transform="translate(0 0) scale(1)"><path d="M4,3.2l-1.2,-1.6M7,1.8l-.8,-1.6M10.5,1.2l-.2,-1.4M14,1.4l.5,-1.4M17,2.6l1.2,-1.4M19.5,4.6l1.6,-1" stroke="#3a4466" stroke-width=".9" fill="none"/><path d="M1,9.5 Q5,1.2 12,1.4 Q18.5,1.6 22,8.5 Q17,4.6 11.5,4.8 Q5.5,5 1,9.5Z" fill="#3a4668"/><path d="M2.5,9.6 Q11.5,1.8 21,8.6 Q12,14 2.5,9.6Z" fill="#b4c0da" stroke="#5a6488" stroke-width=".5"/><circle cx="11.8" cy="7.4" r="3.7" fill="#4a6296"/><circle cx="11.8" cy="7.4" r="1.7" fill="#141c34"/><circle cx="10.4" cy="6.2" r=".9" fill="#e8f0ff"/><path d="M3,10.6 Q11.5,15.4 20.5,9.6" fill="none" stroke="#b090a0" stroke-width=".9"/></g><path d="M1.5,14H9.5M5.5,10V18" stroke="#6cd41c" stroke-width="2.8" fill="none"/><path d="M13.1,19.8H21.9" stroke="#ece400" stroke-width="2.8" fill="none"/><path d="M8.5,20L14.5,11.5" stroke="#202020" stroke-width="1.2"/></svg><svg class="abs" style="left:203px;top:67px" width="24" height="24" viewBox="0 0 24 24" ><g transform="translate(0 0) scale(1)"><path d="M4,3.2l-1.2,-1.6M7,1.8l-.8,-1.6M10.5,1.2l-.2,-1.4M14,1.4l.5,-1.4M17,2.6l1.2,-1.4M19.5,4.6l1.6,-1" stroke="#3a4466" stroke-width=".9" fill="none"/><path d="M1,9.5 Q5,1.2 12,1.4 Q18.5,1.6 22,8.5 Q17,4.6 11.5,4.8 Q5.5,5 1,9.5Z" fill="#3a4668"/><path d="M2.5,9.6 Q11.5,1.8 21,8.6 Q12,14 2.5,9.6Z" fill="#b4c0da" stroke="#5a6488" stroke-width=".5"/><circle cx="11.8" cy="7.4" r="3.7" fill="#4a6296"/><circle cx="11.8" cy="7.4" r="1.7" fill="#141c34"/><circle cx="10.4" cy="6.2" r=".9" fill="#e8f0ff"/><path d="M3,10.6 Q11.5,15.4 20.5,9.6" fill="none" stroke="#b090a0" stroke-width=".9"/></g><path d="M7.5,17H18.5M13,11.5V22.5" stroke="#6cd41c" stroke-width="3" fill="none"/></svg><svg class="abs" style="left:229px;top:67px" width="24" height="24" viewBox="0 0 24 24" ><g transform="translate(0 0) scale(1)"><path d="M4,3.2l-1.2,-1.6M7,1.8l-.8,-1.6M10.5,1.2l-.2,-1.4M14,1.4l.5,-1.4M17,2.6l1.2,-1.4M19.5,4.6l1.6,-1" stroke="#3a4466" stroke-width=".9" fill="none"/><path d="M1,9.5 Q5,1.2 12,1.4 Q18.5,1.6 22,8.5 Q17,4.6 11.5,4.8 Q5.5,5 1,9.5Z" fill="#3a4668"/><path d="M2.5,9.6 Q11.5,1.8 21,8.6 Q12,14 2.5,9.6Z" fill="#b4c0da" stroke="#5a6488" stroke-width=".5"/><circle cx="11.8" cy="7.4" r="3.7" fill="#4a6296"/><circle cx="11.8" cy="7.4" r="1.7" fill="#141c34"/><circle cx="10.4" cy="6.2" r=".9" fill="#e8f0ff"/><path d="M3,10.6 Q11.5,15.4 20.5,9.6" fill="none" stroke="#b090a0" stroke-width=".9"/></g><path d="M7.5,17H18.5" stroke="#ece400" stroke-width="3" fill="none"/></svg><svg class="abs" style="left:271px;top:67px" width="24" height="24" viewBox="0 0 24 24" ><path d="M4,11 A8,8 0 0 1 18.5,8 l1.8,-2.6 l1,7 l-6.6,-.6 l2,-2 A5,5 0 0 0 7.4,11.5z" fill="#80acE4" stroke="#4c7cc4" stroke-width=".6"/><path d="M20,13 A8,8 0 0 1 5.5,16 l-1.8,2.6 l-1,-7 l6.6,.6 l-2,2 A5,5 0 0 0 16.6,12.5z" fill="#80acE4" stroke="#4c7cc4" stroke-width=".6"/></svg><svg class="abs" style="left:298px;top:67px" width="24" height="24" viewBox="0 0 24 24" ><path d="M7,5.5 V18 a5,2 0 0 0 10,0 V5.5" fill="#e8ecf6" stroke="#28282c" stroke-width="1"/><path d="M7,5.5 a5,2 0 1 0 10,0 a5,2 0 1 0 -10,0" fill="#eef0f8" stroke="#28282c" stroke-width="1"/><path d="M7,18 a5,2 0 0 1 10,0" fill="none" stroke="#28282c" stroke-width=".8"/></svg><svg class="abs" style="left:324px;top:67px" width="24" height="24" viewBox="0 0 24 24" ><path d="M7,5.5 V18 a5,2 0 0 0 10,0 V5.5" fill="#e8ecf6" stroke="#28282c" stroke-width="1"/><path d="M7,5.5 a5,2 0 1 0 10,0 a5,2 0 1 0 -10,0" fill="#eef0f8" stroke="#28282c" stroke-width="1"/><path d="M7,18 a5,2 0 0 1 10,0" fill="none" stroke="#28282c" stroke-width=".8"/></svg><svg class="abs" style="left:350px;top:67px" width="24" height="24" viewBox="0 0 24 24" ><path d="M7,5.5 V18 a5,2 0 0 0 10,0 V5.5" fill="#e8ecf6" stroke="#28282c" stroke-width="1"/><path d="M7,5.5 a5,2 0 1 0 10,0 a5,2 0 1 0 -10,0" fill="#eef0f8" stroke="#28282c" stroke-width="1"/><path d="M7,18 a5,2 0 0 1 10,0" fill="none" stroke="#28282c" stroke-width=".8"/></svg><svg class="abs" style="left:376px;top:67px" width="24" height="24" viewBox="0 0 24 24" ><defs><linearGradient id="cc" x1="0" x2="1"><stop offset="0" stop-color="#8ab4ec"/><stop offset=".5" stop-color="#4c7cd0"/><stop offset="1" stop-color="#2c50a0"/></linearGradient></defs><path d="M7,5.5 V18 a5,2 0 0 0 10,0 V5.5" fill="url(#cc)" stroke="#18d8f0" stroke-width="1.2"/><path d="M7,5.5 a5,2 0 1 0 10,0 a5,2 0 1 0 -10,0" fill="#c0d8f8" stroke="#18d8f0" stroke-width="1.2"/></svg><div class="abs" style="left:401.5px;top:66px;width:24px;height:24px;background:#fbe08a;border:1px solid #e8b830"></div><svg class="abs" style="left:401.5px;top:67px" width="24" height="24" viewBox="0 0 24 24" ><defs><linearGradient id="cb" x1="0" x2="1"><stop offset="0" stop-color="#7aa0e0"/><stop offset=".4" stop-color="#4870c0"/><stop offset="1" stop-color="#1c3478"/></linearGradient></defs><path d="M7,5.5 V18 a5,2 0 0 0 10,0 V5.5" fill="url(#cb)" stroke="#101c48" stroke-width=".9"/><path d="M7,5.5 a5,2 0 1 0 10,0 a5,2 0 1 0 -10,0" fill="#b8d0f4" stroke="#101c48" stroke-width=".9"/></svg><svg class="abs" style="left:428px;top:67px" width="24" height="24" viewBox="0 0 24 24" ><path d="M7,5.5 V18 a5,2 0 0 0 10,0 V5.5" fill="#e8f4fc" stroke="#40d8f0" stroke-width="1.2"/><path d="M7,5.5 a5,2 0 1 0 10,0 a5,2 0 1 0 -10,0" fill="#f4fafe" stroke="#40d8f0" stroke-width="1.2"/></svg><svg class="abs" style="left:454px;top:67px" width="24" height="24" viewBox="0 0 24 24" ><defs><linearGradient id="cl" x1="0" x2="1"><stop offset="0" stop-color="#f4f6fc"/><stop offset="1" stop-color="#b8c4e0"/></linearGradient></defs><path d="M7,5.5 V18 a5,2 0 0 0 10,0 V5.5" fill="url(#cl)" stroke="#5c6484" stroke-width=".9"/><path d="M7,5.5 a5,2 0 1 0 10,0 a5,2 0 1 0 -10,0" fill="#f8faff" stroke="#5c6484" stroke-width=".9"/></svg><svg class="abs" style="left:480px;top:67px" width="24" height="24" viewBox="0 0 24 24" ><path d="M7,5.5 V18 a5,2 0 0 0 10,0 V5.5" fill="#d8dce8" stroke="#30343c" stroke-width=".9"/><path d="M7,5.5 a5,2 0 1 0 10,0 a5,2 0 1 0 -10,0" fill="#e8ecf4" stroke="#30343c" stroke-width=".9"/><path d="M9,7.2L11,19.8M12,7.5L9.5,19.5M12,7.5L14.5,19.5M15,7.2L13,19.8M7,12q5,3 10,0" fill="none" stroke="#30343c" stroke-width=".7"/></svg><svg class="abs" style="left:505px;top:67px" width="24" height="24" viewBox="0 0 24 24" ><g transform="translate(-3,-2) scale(.8)"><defs><linearGradient id="cl" x1="0" x2="1"><stop offset="0" stop-color="#f4f6fc"/><stop offset="1" stop-color="#b8c4e0"/></linearGradient></defs><path d="M7,5.5 V18 a5,2 0 0 0 10,0 V5.5" fill="url(#cl)" stroke="#5c6484" stroke-width=".9"/><path d="M7,5.5 a5,2 0 1 0 10,0 a5,2 0 1 0 -10,0" fill="#f8faff" stroke="#5c6484" stroke-width=".9"/></g><g transform="translate(7,4) scale(.8)"><defs><linearGradient id="cb" x1="0" x2="1"><stop offset="0" stop-color="#7aa0e0"/><stop offset=".4" stop-color="#4870c0"/><stop offset="1" stop-color="#1c3478"/></linearGradient></defs><path d="M7,5.5 V18 a5,2 0 0 0 10,0 V5.5" fill="url(#cb)" stroke="#101c48" stroke-width=".9"/><path d="M7,5.5 a5,2 0 1 0 10,0 a5,2 0 1 0 -10,0" fill="#b8d0f4" stroke="#101c48" stroke-width=".9"/></g><path d="M15,2.5l3,2.5l-3,2.5M5,22l-3,-2.5l3,-2.5" fill="none" stroke="#30a818" stroke-width="1.6"/></svg><svg class="abs" style="left:531px;top:67px" width="24" height="24" viewBox="0 0 24 24" ><g transform="translate(-2,0)"><defs><linearGradient id="cb" x1="0" x2="1"><stop offset="0" stop-color="#7aa0e0"/><stop offset=".4" stop-color="#4870c0"/><stop offset="1" stop-color="#1c3478"/></linearGradient></defs><path d="M7,5.5 V18 a5,2 0 0 0 10,0 V5.5" fill="url(#cb)" stroke="#101c48" stroke-width=".9"/><path d="M7,5.5 a5,2 0 1 0 10,0 a5,2 0 1 0 -10,0" fill="#b8d0f4" stroke="#101c48" stroke-width=".9"/></g><g transform="translate(9,8) scale(.62)"><path d="M5,11 A7,7 0 0 1 17.5,8 l1.8,-2.6 l1,7 l-6.6,-.6 l2,-2 A4,4 0 0 0 8.4,11.5z" fill="#7cb0f0" stroke="#2858b0" stroke-width=".6"/><path d="M19,13 A7,7 0 0 1 6.5,16 l-1.8,2.6 l-1,-7 l6.6,.6 l-2,2 A4,4 0 0 0 15.6,12.5z" fill="#7cb0f0" stroke="#2858b0" stroke-width=".6"/></g></svg><svg class="abs" style="left:558px;top:67px" width="24" height="24" viewBox="0 0 24 24" ><rect x="2" y="3" width="16" height="13" fill="#6478a8" stroke="#38487c" stroke-width=".8"/><rect x="4" y="5" width="12" height="9" fill="#4c5c8c"/><path d="M7,6l12,13" stroke="#b8c4dc" stroke-width="3"/><path d="M19,6l-12,13" stroke="#4c80d0" stroke-width="3"/><circle cx="7.5" cy="6.5" r="2.6" fill="#c8d0e4" stroke="#707c9c" stroke-width=".6"/><path d="M19,19l2,2" stroke="#8894b4" stroke-width="2.4"/></svg><svg class="abs" style="left:600px;top:67px" width="24" height="24" viewBox="0 0 24 24" ><path d="M1.5,4.0 l5,-2.5 l5,2.5 l-5,2.5z" fill="#c8c8c8" stroke="#303030" stroke-width=".6"/><path d="M1.5,4.0 l5,2.5 v5 l-5,-2.5z" fill="#909090" stroke="#303030" stroke-width=".6"/><path d="M6.5,6.5 l5,-2.5 v5 l-5,2.5z" fill="#585858" stroke="#303030" stroke-width=".6"/><path d="M11,4.0 l5,-2.5 l5,2.5 l-5,2.5z" fill="#ffffff" stroke="#404040" stroke-width=".6"/><path d="M11,4.0 l5,2.5 v5 l-5,-2.5z" fill="#f0f0f0" stroke="#404040" stroke-width=".6"/><path d="M16,6.5 l5,-2.5 v5 l-5,2.5z" fill="#e0e0e0" stroke="#404040" stroke-width=".6"/><path d="M1.5,17H9.5M5.5,13V21" stroke="#6cd41c" stroke-width="2.8" fill="none"/><path d="M14,14h4.5m-4.5,0l-1,3q4,-1.5 4.5,1.5q0,3 -4.5,2.5" stroke="#3c78d8" stroke-width="1.5" fill="none"/></svg><svg class="abs" style="left:626px;top:67px" width="24" height="24" viewBox="0 0 24 24" ><path d="M1.5,4.0 l5,-2.5 l5,2.5 l-5,2.5z" fill="#c8c8c8" stroke="#303030" stroke-width=".6"/><path d="M1.5,4.0 l5,2.5 v5 l-5,-2.5z" fill="#909090" stroke="#303030" stroke-width=".6"/><path d="M6.5,6.5 l5,-2.5 v5 l-5,2.5z" fill="#585858" stroke="#303030" stroke-width=".6"/><path d="M11,4.0 l5,-2.5 l5,2.5 l-5,2.5z" fill="#ffffff" stroke="#404040" stroke-width=".6"/><path d="M11,4.0 l5,2.5 v5 l-5,-2.5z" fill="#f0f0f0" stroke="#404040" stroke-width=".6"/><path d="M16,6.5 l5,-2.5 v5 l-5,2.5z" fill="#e0e0e0" stroke="#404040" stroke-width=".6"/><rect x="4" y="10" width="5" height="11.5" rx="2" fill="#181818"/><circle cx="6.5" cy="13" r="1.9" fill="#f0c000"/><circle cx="6.5" cy="18.2" r="1.9" fill="#18c018"/><rect x="14.5" y="10" width="5" height="11.5" rx="2" fill="#181818"/><circle cx="17.0" cy="13" r="1.9" fill="#e81010"/><circle cx="17.0" cy="18.2" r="1.9" fill="#f0c000"/></svg><svg class="abs" style="left:653px;top:67px" width="24" height="24" viewBox="0 0 24 24" ><path d="M1.5,4.0 l5,-2.5 l5,2.5 l-5,2.5z" fill="#c8c8c8" stroke="#303030" stroke-width=".6"/><path d="M1.5,4.0 l5,2.5 v5 l-5,-2.5z" fill="#909090" stroke="#303030" stroke-width=".6"/><path d="M6.5,6.5 l5,-2.5 v5 l-5,2.5z" fill="#585858" stroke="#303030" stroke-width=".6"/><path d="M11,4.0 l5,-2.5 l5,2.5 l-5,2.5z" fill="#ffffff" stroke="#404040" stroke-width=".6"/><path d="M11,4.0 l5,2.5 v5 l-5,-2.5z" fill="#f0f0f0" stroke="#404040" stroke-width=".6"/><path d="M16,6.5 l5,-2.5 v5 l-5,2.5z" fill="#e0e0e0" stroke="#404040" stroke-width=".6"/><path d="M5.5,15 A6.5,6.5 0 0 1 17.0,12 l1.8,-2.6 l1,7 l-6.6,-.6 l2,-2 A3.5,3.5 0 0 0 8.9,15.5z" fill="#a8d820" stroke="#507808" stroke-width=".6"/><path d="M18.5,17 A6.5,6.5 0 0 1 7.0,20 l-1.8,2.6 l-1,-7 l6.6,.6 l-2,2 A3.5,3.5 0 0 0 15.1,16.5z" fill="#a8d820" stroke="#507808" stroke-width=".6"/></svg><svg class="abs" style="left:678px;top:67px" width="24" height="24" viewBox="0 0 24 24" ><path d="M1.5,4.0 l5,-2.5 l5,2.5 l-5,2.5z" fill="#c8c8c8" stroke="#303030" stroke-width=".6"/><path d="M1.5,4.0 l5,2.5 v5 l-5,-2.5z" fill="#909090" stroke="#303030" stroke-width=".6"/><path d="M6.5,6.5 l5,-2.5 v5 l-5,2.5z" fill="#585858" stroke="#303030" stroke-width=".6"/><path d="M11,4.0 l5,-2.5 l5,2.5 l-5,2.5z" fill="#ffffff" stroke="#404040" stroke-width=".6"/><path d="M11,4.0 l5,2.5 v5 l-5,-2.5z" fill="#f0f0f0" stroke="#404040" stroke-width=".6"/><path d="M16,6.5 l5,-2.5 v5 l-5,2.5z" fill="#e0e0e0" stroke="#404040" stroke-width=".6"/><path d="M1.5,15H9.5M5.5,11V19" stroke="#6cd41c" stroke-width="2.8" fill="none"/><path d="M13.1,20.5H21.9" stroke="#ece400" stroke-width="2.8" fill="none"/><path d="M8.5,20.5L14.5,12" stroke="#202020" stroke-width="1.2"/></svg><svg class="abs" style="left:705px;top:67px" width="24" height="24" viewBox="0 0 24 24" ><g transform="translate(0,1)"><defs><linearGradient id="cb" x1="0" x2="1"><stop offset="0" stop-color="#7aa0e0"/><stop offset=".4" stop-color="#4870c0"/><stop offset="1" stop-color="#1c3478"/></linearGradient></defs><path d="M7,5.5 V18 a5,2 0 0 0 10,0 V5.5" fill="url(#cb)" stroke="#101c48" stroke-width=".9"/><path d="M7,5.5 a5,2 0 1 0 10,0 a5,2 0 1 0 -10,0" fill="#b8d0f4" stroke="#101c48" stroke-width=".9"/><path d="M12,9v10" stroke="#c0d0f0" stroke-width="1" stroke-dasharray="2 2"/></g></svg><svg class="abs" style="left:731px;top:67px" width="24" height="24" viewBox="0 0 24 24" ><g transform="translate(0,1)"><defs><linearGradient id="cb" x1="0" x2="1"><stop offset="0" stop-color="#7aa0e0"/><stop offset=".4" stop-color="#4870c0"/><stop offset="1" stop-color="#1c3478"/></linearGradient></defs><path d="M7,5.5 V18 a5,2 0 0 0 10,0 V5.5" fill="url(#cb)" stroke="#101c48" stroke-width=".9"/><path d="M7,5.5 a5,2 0 1 0 10,0 a5,2 0 1 0 -10,0" fill="#b8d0f4" stroke="#101c48" stroke-width=".9"/><path d="M10,9v11M13,9v11" stroke="#e8e8a0" stroke-width="1.2"/></g></svg><svg class="abs" style="left:758px;top:67px" width="24" height="24" viewBox="0 0 24 24" ><path d="M7,5.5 V18 a5,2 0 0 0 10,0 V5.5" fill="#e8f4fc" stroke="#40d8f0" stroke-width="1.2"/><path d="M7,5.5 a5,2 0 1 0 10,0 a5,2 0 1 0 -10,0" fill="#f4fafe" stroke="#40d8f0" stroke-width="1.2"/><path d="M7.5,12l3.5,4.5l6,-8" fill="none" stroke="#28b428" stroke-width="2.4"/></svg><svg class="abs" style="left:783px;top:67px" width="24" height="24" viewBox="0 0 24 24" ><g transform="translate(1,1)"><path d="M7,5.5 V18 a5,2 0 0 0 10,0 V5.5" fill="#e8f4fc" stroke="#40d8f0" stroke-width="1.2"/><path d="M7,5.5 a5,2 0 1 0 10,0 a5,2 0 1 0 -10,0" fill="#f4fafe" stroke="#40d8f0" stroke-width="1.2"/></g><rect x="15" y="2" width="6" height="6" fill="none" stroke="#e08030" stroke-width="1.3"/><path d="M2,16h6" stroke="#8088a0" stroke-width="1.2"/></svg><svg class="abs" style="left:810px;top:67px" width="24" height="24" viewBox="0 0 24 24" ><path d="M7,5.5 V18 a5,2 0 0 0 10,0 V5.5 a5,2 0 0 0 -10,0" fill="#dcecfc" stroke="#70a8e8" stroke-width="1"/><path d="M9,7L11,20M12,7.5L10,19.5M12,7.5L14.5,19.5M15,7L13,20" stroke="#70a8e8" stroke-width=".7" fill="none"/></svg><svg class="abs" style="left:835px;top:67px" width="24" height="24" viewBox="0 0 24 24" ><path d="M2,6 L12,3 L22,6 L12,10z" fill="#6c98e0" stroke="#102060" stroke-width=".7"/><path d="M2,6 L12,10 L12.5,21 L4,13z" fill="#2c50a8" stroke="#102060" stroke-width=".7"/><path d="M22,6 L12,10 L12.5,21 L20,13z" fill="#18306c" stroke="#102060" stroke-width=".7"/></svg><svg class="abs" style="left:876px;top:67px" width="24" height="24" viewBox="0 0 24 24" ><path d="M7.5,13.5 L3,19.5" stroke="#8c8c94" stroke-width="3.2" stroke-linecap="round"/><path d="M7.5,13.5 L3,19.5" stroke="#d8d8e0" stroke-width="1.4" stroke-linecap="round"/><circle cx="11" cy="9.5" r="5.5" fill="#cfe0f6" stroke="#7888a8" stroke-width="1.6"/><circle cx="9.8" cy="8.1" r="2.475" fill="#f4f8ff" opacity=".9"/><rect x="13" y="12" width="8" height="8" fill="#707070" stroke="#404040" stroke-width=".6"/><path d="M1.5,3h4M3.5,1v4" stroke="#000" stroke-width="1"/><path d="M9.5,7v5l3.5,-2.5z" fill="#8090b0"/></svg><svg class="abs" style="left:903px;top:67px" width="24" height="24" viewBox="0 0 24 24" ><path d="M7.5,14 L4,19.5" stroke="#8c8c94" stroke-width="3.2" stroke-linecap="round"/><path d="M7.5,14 L4,19.5" stroke="#d8d8e0" stroke-width="1.4" stroke-linecap="round"/><circle cx="11" cy="10" r="5.5" fill="#cfe0f6" stroke="#7888a8" stroke-width="1.6"/><circle cx="9.8" cy="8.6" r="2.475" fill="#f4f8ff" opacity=".9"/><rect x="12" y="12" width="8" height="8" fill="#707070" stroke="#404040" stroke-width=".6"/><path d="M2,2.5l3.4,3.4M22,2.5l-3.4,3.4M2,21.5l3.4,-3.4M22,21.5l-3.4,-3.4" stroke="#38b820" stroke-width="1.8"/><path d="M1.2,5v-3.3h3.3M22.8,5v-3.3h-3.3M1.2,19v3.3h3.3M22.8,19v3.3h-3.3" stroke="#38b820" stroke-width="1.4" fill="none"/></svg><svg class="abs" style="left:929px;top:67px" width="24" height="24" viewBox="0 0 24 24" ><rect x="4.5" y="5" width="15" height="13.5" fill="#fff" stroke="#202020" stroke-width="1.2"/><text x="12" y="15.5" font-size="8" font-weight="bold" text-anchor="middle" font-family="Liberation Sans,sans-serif">1:1</text><path d="M2,2.5l3.4,3.4M22,2.5l-3.4,3.4M2,21.5l3.4,-3.4M22,21.5l-3.4,-3.4" stroke="#38b820" stroke-width="1.8"/><path d="M1.2,5v-3.3h3.3M22.8,5v-3.3h-3.3M1.2,19v3.3h3.3M22.8,19v3.3h-3.3" stroke="#38b820" stroke-width="1.4" fill="none"/></svg><svg class="abs" style="left:955px;top:67px" width="24" height="24" viewBox="0 0 24 24" ><path d="M5,19L19,5" stroke="#30a020" stroke-width="2.2"/><path d="M20.5,3.5l-7,1.5l5.5,5.5z" fill="#30a020"/><circle cx="5" cy="19" r="2.8" fill="#a0a0a0" stroke="#505050" stroke-width=".7"/></svg><svg class="abs" style="left:981px;top:67px" width="24" height="24" viewBox="0 0 24 24" ><path d="M3.5,11 A8.5,8.5 0 0 1 19.0,8 l1.8,-2.6 l1,7 l-6.6,-.6 l2,-2 A5.5,5.5 0 0 0 6.9,11.5z" fill="#38b828" stroke="#107010" stroke-width=".6"/><path d="M20.5,13 A8.5,8.5 0 0 1 5.0,16 l-1.8,2.6 l-1,-7 l6.6,.6 l-2,2 A5.5,5.5 0 0 0 17.1,12.5z" fill="#38b828" stroke="#107010" stroke-width=".6"/></svg><svg class="abs" style="left:1006px;top:67px" width="24" height="24" viewBox="0 0 24 24" ><g transform="translate(0 -0.5) scale(1)"><path d="M4,3.2l-1.2,-1.6M7,1.8l-.8,-1.6M10.5,1.2l-.2,-1.4M14,1.4l.5,-1.4M17,2.6l1.2,-1.4M19.5,4.6l1.6,-1" stroke="#3a4466" stroke-width=".9" fill="none"/><path d="M1,9.5 Q5,1.2 12,1.4 Q18.5,1.6 22,8.5 Q17,4.6 11.5,4.8 Q5.5,5 1,9.5Z" fill="#3a4668"/><path d="M2.5,9.6 Q11.5,1.8 21,8.6 Q12,14 2.5,9.6Z" fill="#b4c0da" stroke="#5a6488" stroke-width=".5"/><circle cx="11.8" cy="7.4" r="3.7" fill="#4a6296"/><circle cx="11.8" cy="7.4" r="1.7" fill="#141c34"/><circle cx="10.4" cy="6.2" r=".9" fill="#e8f0ff"/><path d="M3,10.6 Q11.5,15.4 20.5,9.6" fill="none" stroke="#b090a0" stroke-width=".9"/></g><circle cx="12.5" cy="16" r="6.5" fill="#f8d038" stroke="#b08810" stroke-width=".7"/><circle cx="10.3" cy="14.5" r=".9" fill="#403000"/><circle cx="14.7" cy="14.5" r=".9" fill="#403000"/><path d="M9.5,18q3,2.5 6,0" stroke="#403000" stroke-width=".9" fill="none"/></svg><svg class="abs" style="left:1050px;top:67px" width="24" height="24" viewBox="0 0 24 24" ><path d="M2,13L12,8L22,13L12,19z" fill="#f0f2f8" stroke="#b0b4c4" stroke-width=".7"/><path d="M9,14V2.5" stroke="#2070e8" stroke-width="1.8"/><path d="M9,0.5l-2.6,4h5.2z" fill="#2070e8"/><path d="M9,14L19,8" stroke="#30b030" stroke-width="1.6"/><path d="M21,6.8l-4.4,.6l2.4,3.2z" fill="#30b030"/><path d="M9,14L18,20" stroke="#e02020" stroke-width="1.6"/><path d="M20,21.5l-4.4,-.8l2.6,-3z" fill="#e02020"/><circle cx="9" cy="14" r="1.8" fill="#e8e8e8" stroke="#606060" stroke-width=".6"/></svg><svg class="abs" style="left:1076px;top:67px" width="24" height="24" viewBox="0 0 24 24" ><g transform="translate(9,0) scale(.55)"><path d="M2,13L12,8L22,13L12,19z" fill="#f0f2f8" stroke="#b0b4c4" stroke-width=".7"/><path d="M9,14V2.5" stroke="#2070e8" stroke-width="1.8"/><path d="M9,0.5l-2.6,4h5.2z" fill="#2070e8"/><path d="M9,14L19,8" stroke="#30b030" stroke-width="1.6"/><path d="M21,6.8l-4.4,.6l2.4,3.2z" fill="#30b030"/><path d="M9,14L18,20" stroke="#e02020" stroke-width="1.6"/><path d="M20,21.5l-4.4,-.8l2.6,-3z" fill="#e02020"/><circle cx="9" cy="14" r="1.8" fill="#e8e8e8" stroke="#606060" stroke-width=".6"/></g><path d="M3,20l7,-7" stroke="#38b020" stroke-width="3"/><path d="M12,10.5l-6,1.2l4.8,4.8z" fill="#38b020"/><rect x="10" y="17" width="10" height="4.5" fill="#d8dce8" stroke="#8890a8" stroke-width=".6"/></svg><svg class="abs" style="left:1101px;top:67px" width="24" height="24" viewBox="0 0 24 24" ><g transform="translate(9,0) scale(.55)"><path d="M2,13L12,8L22,13L12,19z" fill="#f0f2f8" stroke="#b0b4c4" stroke-width=".7"/><path d="M9,14V2.5" stroke="#2070e8" stroke-width="1.8"/><path d="M9,0.5l-2.6,4h5.2z" fill="#2070e8"/><path d="M9,14L19,8" stroke="#30b030" stroke-width="1.6"/><path d="M21,6.8l-4.4,.6l2.4,3.2z" fill="#30b030"/><path d="M9,14L18,20" stroke="#e02020" stroke-width="1.6"/><path d="M20,21.5l-4.4,-.8l2.6,-3z" fill="#e02020"/><circle cx="9" cy="14" r="1.8" fill="#e8e8e8" stroke="#606060" stroke-width=".6"/></g><path d="M4,14l8,8" stroke="#38b020" stroke-width="3"/><path d="M2,11.5l1.2,6l4.8,-4.8z" fill="#38b020"/><path d="M14.5,23.5l-1.2,-6l-4.8,4.8z" fill="#38b020"/></svg><svg class="abs" style="left:1145px;top:67px" width="24" height="24" viewBox="0 0 24 24" ><rect x="2.0" y="2.0" width="6.2" height="6.2" fill="#1848e0"/><rect x="8.8" y="2.0" width="6.2" height="6.2" fill="#f0d000"/><rect x="15.6" y="2.0" width="6.2" height="6.2" fill="#18d018"/><rect x="2.0" y="8.8" width="6.2" height="6.2" fill="#f08000"/><rect x="8.8" y="8.8" width="6.2" height="6.2" fill="#a06000"/><rect x="15.6" y="8.8" width="6.2" height="6.2" fill="#f000f0"/><rect x="2.0" y="15.6" width="6.2" height="6.2" fill="#1030d0"/><rect x="8.8" y="15.6" width="6.2" height="6.2" fill="#18a018"/><rect x="15.6" y="15.6" width="6.2" height="6.2" fill="#808080"/></svg><svg class="abs" style="left:1171px;top:67px" width="24" height="24" viewBox="0 0 24 24" ><rect x="4" y="1.5" width="16" height="21" fill="#f4f4f8" stroke="#5868a0" stroke-width="1"/><rect x="6" y="4" width="12" height="2.5" fill="#f0b040"/><rect x="6" y="8.5" width="12" height="11" fill="#c8d0e8"/><rect x="7" y="10" width="4" height="4" fill="#e03030"/><rect x="12" y="10" width="4" height="4" fill="#30b030"/><rect x="7" y="15" width="4" height="3.5" fill="#3050e0"/><rect x="12" y="15" width="4" height="3.5" fill="#e0d030"/></svg><svg class="abs" style="left:1196px;top:67px" width="24" height="24" viewBox="0 0 24 24" ><circle cx="12" cy="12" r="10" fill="#5c8c30" stroke="#385818" stroke-width="1"/><path d="M6,6l12,12M18,6l-12,12" stroke="#d8dce4" stroke-width="3"/><path d="M6,6l12,12M18,6l-12,12" stroke="#8890a0" stroke-width=".8"/></svg><svg class="abs" style="left:1223px;top:67px" width="24" height="24" viewBox="0 0 24 24" ><rect x="2" y="2.5" width="20" height="19" fill="#e8f0fc" stroke="#3858a8" stroke-width="1"/><rect x="2" y="2.5" width="20" height="4" fill="#3868c8"/><path d="M4,9h5M4,12h5M4,15h5M4,18h5" stroke="#806020" stroke-width="1.4" stroke-dasharray="1.5 1"/><path d="M11,10l9,9M20,10l-9,9" stroke="#a8b0c0" stroke-width="2.4"/></svg><svg class="abs" style="left:1249px;top:67px" width="24" height="24" viewBox="0 0 24 24" ><rect x="2" y="4" width="18" height="17" fill="none" stroke="#303030" stroke-width="1.2" stroke-dasharray="2 1.6"/><path d="M9,9l11,-5l2,4l-9,6z" fill="#f0c890" stroke="#a07030" stroke-width=".7"/><path d="M6,14l2,4l4,-2M7,10l1.5,2" stroke="#3060d0" stroke-width="1.4" fill="none"/><path d="M5,17l1.5,1.5M8,20l1,1" stroke="#e8d020" stroke-width="1.6"/></svg><svg class="abs" style="left:1276px;top:67px" width="24" height="24" viewBox="0 0 24 24" ><path d="M5,4h15l-4,16h-15z" fill="#e05050" stroke="#3060c0" stroke-width="1.4"/><path d="M8.5,4l-4,16M12.5,4l-4,16M16.5,4l-4,16M4,8h15M3,12h15M2,16h15" stroke="#f8c8c8" stroke-width=".8"/></svg><div class="lbl" style="left:136px">属性/过滤器</div><div class="lbl" style="left:427px">图形</div><div class="lbl" style="left:730px">图像 (进阶)</div><div class="lbl" style="left:955px">视图</div><div class="lbl" style="left:1088px">工作平面</div><div class="lbl" style="left:1223px">系统</div><div class="sep" style="left:13px"></div><div class="sep" style="left:264px"></div><div class="sep" style="left:592px"></div><div class="sep" style="left:869px"></div><div class="sep" style="left:1042px"></div><div class="sep" style="left:1137px"></div>
<div id="left"></div><div class="abs" style="left:3px;top:121px;width:55px;height:3px;background-image:repeating-linear-gradient(90deg,#fff 0 2px,transparent 2px 4px)"></div><div class="abs" style="left:3px;top:372px;width:55px;height:3px;background-image:repeating-linear-gradient(90deg,#fff 0 2px,transparent 2px 4px)"></div><svg class="abs" style="left:7px;top:132px" width="22" height="22" viewBox="0 0 24 24" ><path d="M9.5,14.5 L4.5,20.5" stroke="#8c8c94" stroke-width="3.2" stroke-linecap="round"/><path d="M9.5,14.5 L4.5,20.5" stroke="#d8d8e0" stroke-width="1.4" stroke-linecap="round"/><circle cx="13" cy="10.5" r="6" fill="#cfe0f6" stroke="#7888a8" stroke-width="1.6"/><circle cx="11.8" cy="9.1" r="2.7" fill="#f4f8ff" opacity=".9"/><path d="M5,7l3,2M4.5,10.5l3,1.5" stroke="#a8b8d8" stroke-width="1"/></svg><svg class="abs" style="left:7px;top:158px" width="22" height="22" viewBox="0 0 24 24" ><defs><linearGradient id="fg2" x1="0" y1="0" x2="1" y2="1"><stop offset="0" stop-color="#ffffff"/><stop offset="1" stop-color="#b8d0f4"/></linearGradient></defs><rect x="4.5" y="6.5" width="15.5" height="12.5" fill="url(#fg2)" stroke="#303848" stroke-width=".9"/><path d="M2,4l3.4,3.4M22.5,4l-3.4,3.4M2,21.5l3.4,-3.4M22.5,21.5l-3.4,-3.4" stroke="#38b820" stroke-width="1.8"/><path d="M1.2,6v-2.8h2.8M23.3,6v-2.8h-2.8M1.2,19.5v2.8h2.8M23.3,19.5v2.8h-2.8" stroke="#38b820" stroke-width="1.4" fill="none"/></svg><svg class="abs" style="left:7px;top:184px" width="22" height="22" viewBox="0 0 24 24" ><path d="M7.5,13.5 L3,19.5" stroke="#8c8c94" stroke-width="3.2" stroke-linecap="round"/><path d="M7.5,13.5 L3,19.5" stroke="#d8d8e0" stroke-width="1.4" stroke-linecap="round"/><circle cx="11" cy="9.5" r="5.5" fill="#cfe0f6" stroke="#7888a8" stroke-width="1.6"/><circle cx="9.8" cy="8.1" r="2.475" fill="#f4f8ff" opacity=".9"/><rect x="13" y="12" width="8" height="8" fill="#707070" stroke="#404040" stroke-width=".6"/><path d="M1.5,3h4M3.5,1v4" stroke="#000" stroke-width="1"/><path d="M19,1h5l-2.5,2.8z" fill="#000"/></svg><svg class="abs" style="left:7px;top:210px" width="22" height="22" viewBox="0 0 24 24" ><path d="M2,13L12,8L22,13L12,19z" fill="#f0f2f8" stroke="#b0b4c4" stroke-width=".7"/><path d="M9,14V2.5" stroke="#2070e8" stroke-width="1.8"/><path d="M9,0.5l-2.6,4h5.2z" fill="#2070e8"/><path d="M9,14L19,8" stroke="#30b030" stroke-width="1.6"/><path d="M9,14L18,20" stroke="#e02020" stroke-width="1.6"/><path d="M20,21.5l-4.4,-.8l2.6,-3z" fill="#e02020"/><circle cx="9" cy="14" r="1.8" fill="#e8e8e8" stroke="#606060" stroke-width=".6"/><path d="M19,1h5l-2.5,2.8z" fill="#000"/></svg><svg class="abs" style="left:7px;top:236px" width="22" height="22" viewBox="0 0 24 24" ><path d="M3,3h10l2,2.2h-10zM3,6.2h10l2,2.2h-10zM3,9.4h10l2,2.2h-10z" fill="#90a8e0" stroke="#5068b0" stroke-width=".5"/><ellipse cx="11.5" cy="16.5" rx="7.5" ry="4.6" fill="#c89c78" stroke="#705038" stroke-width=".7"/><circle cx="8" cy="17" r="1.7" fill="#1840e0"/><circle cx="12" cy="18.3" r="1.7" fill="#18b018"/><circle cx="15.5" cy="16" r="1.7" fill="#e01818"/><path d="M20.5,3.5L13,14.5" stroke="#a86828" stroke-width="2"/><path d="M13.6,13.4l-1.6,3l2.8,-2z" fill="#302010"/><path d="M19,1h5l-2.5,2.8z" fill="#000"/></svg><svg class="abs" style="left:7px;top:262px" width="22" height="22" viewBox="0 0 24 24" ><path d="M5,11 A7,7 0 0 1 17.5,8 l1.8,-2.6 l1,7 l-6.6,-.6 l2,-2 A4,4 0 0 0 8.4,11.5z" fill="#5c94dc" stroke="#2c5cb0" stroke-width=".6"/><path d="M19,13 A7,7 0 0 1 6.5,16 l-1.8,2.6 l-1,-7 l6.6,.6 l-2,2 A4,4 0 0 0 15.6,12.5z" fill="#5c94dc" stroke="#2c5cb0" stroke-width=".6"/><path d="M19,1h5l-2.5,2.8z" fill="#000"/></svg><svg class="abs" style="left:7px;top:288px" width="22" height="22" viewBox="0 0 24 24" ><text x="11" y="19" font-size="20" font-weight="bold" text-anchor="middle" fill="#4878d0" stroke="#204090" stroke-width=".5" font-family="Liberation Sans,sans-serif">?</text><ellipse cx="11" cy="21.5" rx="6" ry="1.4" fill="#a0a8b8" opacity=".6"/><path d="M19,1h5l-2.5,2.8z" fill="#000"/></svg><svg class="abs" style="left:7px;top:314px" width="22" height="22" viewBox="0 0 24 24" ><path d="M5,7h14l-1.8,14h-10.4z" fill="#b8e0f0" stroke="#4088b0" stroke-width=".9"/><path d="M4,7h16" stroke="#306890" stroke-width="1.6"/><path d="M9,10l1,8M15,10l-1,8M12,10v8" stroke="#e8f8ff" stroke-width="1"/><path d="M10,6l2,-4l2,4z" fill="#e8c020" stroke="#806000" stroke-width=".5"/><path d="M19,1h5l-2.5,2.8z" fill="#000"/></svg><svg class="abs" style="left:7px;top:340px" width="22" height="22" viewBox="0 0 24 24" ><path d="M5,2v18" stroke="#505050" stroke-width="2"/><circle cx="13" cy="12" r="6.5" fill="none" stroke="#a05818" stroke-width="1.6"/><path d="M13,3v18M4,12h18M6.5,5.5l13,13M19.5,5.5l-13,13" stroke="#a05818" stroke-width="1.1"/><circle cx="13" cy="12" r="2" fill="#f08020"/><path d="M3,20l5,-2l5,2l5,-2l4,2l-2,2.5h-15z" fill="#f08020"/><path d="M19,1h5l-2.5,2.8z" fill="#000"/></svg><svg class="abs" style="left:32.5px;top:132px" width="22" height="22" viewBox="0 0 24 24" ><path d="M4,4l14,16M8,2l12,14" stroke="#3870d8" stroke-width="1.4" stroke-dasharray="3 2"/><path d="M6,20L19,4" stroke="#b87820" stroke-width="4.2"/><path d="M6,20L19,4" stroke="#f0c060" stroke-width="1.6"/><path d="M4.4,22l.6,-4l3,2.4z" fill="#282018"/><path d="M17.8,5.4l2.4,-2.9" stroke="#d83030" stroke-width="4.2"/><path d="M19,1h5l-2.5,2.8z" fill="#000"/></svg><svg class="abs" style="left:32.5px;top:158px" width="22" height="22" viewBox="0 0 24 24" ><path d="M9,3a5,5 0 1 0 3,9q5,-3 8,1a4,4 0 0 1 -7,5" fill="none" stroke="#3870d8" stroke-width="1.8"/><path d="M6,20L19,4" stroke="#b87820" stroke-width="4.2"/><path d="M6,20L19,4" stroke="#f0c060" stroke-width="1.6"/><path d="M4.4,22l.6,-4l3,2.4z" fill="#282018"/><path d="M17.8,5.4l2.4,-2.9" stroke="#d83030" stroke-width="4.2"/><path d="M19,1h5l-2.5,2.8z" fill="#000"/></svg><svg class="abs" style="left:32.5px;top:184px" width="22" height="22" viewBox="0 0 24 24" ><rect x="3" y="5" width="15" height="15" fill="#f8f8e8" stroke="#e8e000" stroke-width="1.6"/><rect x="14" y="3" width="7" height="7" fill="none" stroke="#e8e000" stroke-width="1.4"/><path d="M6,12l4,5l7,-9" fill="none" stroke="#28a828" stroke-width="2.6"/><path d="M19,1h5l-2.5,2.8z" fill="#000"/></svg><svg class="abs" style="left:32.5px;top:210px" width="22" height="22" viewBox="0 0 24 24" ><path d="M3,5q5,-4 8,6t10,6" fill="none" stroke="#3870d8" stroke-width="1.8"/><path d="M3,17q5,4 9,-4t9,-7" fill="none" stroke="#3870d8" stroke-width="1.4"/><path d="M6,20L19,4" stroke="#b87820" stroke-width="4.2"/><path d="M6,20L19,4" stroke="#f0c060" stroke-width="1.6"/><path d="M4.4,22l.6,-4l3,2.4z" fill="#282018"/><path d="M17.8,5.4l2.4,-2.9" stroke="#d83030" stroke-width="4.2"/><path d="M19,1h5l-2.5,2.8z" fill="#000"/></svg><svg class="abs" style="left:32.5px;top:236px" width="22" height="22" viewBox="0 0 24 24" ><path d="M7,5l14,-2l-4,14l-14,3z" fill="#70a8f0" stroke="#2858c0" stroke-width="1"/><path d="M14,4l-4,14.5M5.5,11.5l13.5,-2.5" stroke="#d0e4ff" stroke-width="1.2"/><path d="M19,1h5l-2.5,2.8z" fill="#000"/></svg><svg class="abs" style="left:32.5px;top:262px" width="22" height="22" viewBox="0 0 24 24" ><path d="M3,7L12,3L21,7L12,11z" fill="#d8d8d8" stroke="#404040" stroke-width=".7"/><path d="M3,7L12,11V21L3,17z" fill="#909090" stroke="#404040" stroke-width=".7"/><path d="M21,7L12,11V21L21,17z" fill="#606060" stroke="#404040" stroke-width=".7"/><path d="M19,1h5l-2.5,2.8z" fill="#000"/></svg><svg class="abs" style="left:32.5px;top:288px" width="22" height="22" viewBox="0 0 24 24" ><path d="M3,6v15M21,6v15" stroke="#303030" stroke-width="1.4"/><path d="M4,9h16" stroke="#e8e000" stroke-width="1.8"/><path d="M3.5,9l4,-2.5v5zM20.5,9l-4,-2.5v5z" fill="#303030"/><path d="M19,1h5l-2.5,2.8z" fill="#000"/></svg><svg class="abs" style="left:32.5px;top:314px" width="22" height="22" viewBox="0 0 24 24" ><path d="M4,10l8,-7v4.5q9,0 8,12q-2,-6.5 -8,-6.5v4.5z" fill="#a0a0a0" stroke="#686868" stroke-width=".8"/><path d="M19,1h5l-2.5,2.8z" fill="#000"/></svg><svg class="abs" style="left:32.5px;top:340px" width="22" height="22" viewBox="0 0 24 24" ><path d="M2,5h7l2,2h9v9h-18z" fill="#e8c050" stroke="#a07818" stroke-width=".8"/><path d="M2,16l3,-7h16l-3,7z" fill="#f8dc78" stroke="#a07818" stroke-width=".8"/><path d="M10,4q3,-3 7,-1l1,-1.5l.8,4.6l-4.6,-.4l1.2,-1.2q-2,-1 -4,.5z" fill="#30a830"/><path d="M6,14h13l3,3v6h-16z" fill="#fff" stroke="#303030" stroke-width=".9"/></svg>
<div id="status"></div><div class="abs" style="left:1341px;top:1003px;width:131px;height:16px;background:#fff"></div><svg class="abs" style="left:1459px;top:1004px" width="14" height="14" viewBox="0 0 14 14" ><circle cx="8.5" cy="5.5" r="3.6" fill="none" stroke="#3860a8" stroke-width="1.2"/><path d="M6,8.2L1.5,12.8" stroke="#3860a8" stroke-width="1.6"/></svg><div class="abs" style="left:1337px;top:1003px;width:3px;height:16px;background-image:repeating-linear-gradient(#fff 0 2px,transparent 2px 4px);border-left:1px dotted #a0a4b4"></div><div class="abs" style="left:1475px;top:1003px;width:3px;height:16px;background-image:repeating-linear-gradient(#fff 0 2px,transparent 2px 4px);border-left:1px dotted #a0a4b4"></div><div class="abs" style="left:1659px;top:1003px;width:3px;height:16px;background-image:repeating-linear-gradient(#fff 0 2px,transparent 2px 4px);border-left:1px dotted #a0a4b4"></div><div class="st" style="left:1486px;top:1004px">绝对 XY 上视图</div><div class="vs" style="left:1593px;top:1003px"></div><div class="st" style="left:1601px;top:1004px">绝对视图</div><div class="st" style="left:1669px;top:1004px;font-weight:bold">LAYER0</div><div class="vs" style="left:1726px;top:1003px"></div><div class="abs" style="left:1761.5px;top:1006px;width:33px;height:11px;background:#4a6084"></div><div class="abs" style="left:1804.5px;top:1006px;width:33px;height:11px;background:#4a6084"></div><div class="abs" style="left:1847px;top:1006px;width:33px;height:11px;background:#4a6084"></div><div class="vs" style="left:1756px;top:1004px;height:13px;background:#b8bccc"></div><div class="vs" style="left:1799px;top:1004px;height:13px;background:#b8bccc"></div><div class="vs" style="left:1842px;top:1004px;height:13px;background:#b8bccc"></div><div class="vs" style="left:1886px;top:1004px;height:13px;background:#b8bccc"></div><svg class="abs" style="left:1894.5px;top:1003.5px" width="13" height="13" viewBox="0 0 15 15" ><circle cx="7.5" cy="7.5" r="6.5" fill="#2850c0" stroke="#102060" stroke-width=".8"/><path d="M3,5q3,-3 6,-1q1,3 -2,4q-1,3 -3,1z" fill="#30b030"/><path d="M9,9q3,-1 4,1q-1,3 -4,3z" fill="#30b030"/><circle cx="5.5" cy="4.5" r="1.5" fill="#a0c8ff" opacity=".7"/></svg><div class="abs" style="left:2px;top:1021px;width:1918px;height:1px;background:#9a9ea8"></div><div class="vs" style="left:1131px;top:1024px"></div><div class="vs" style="left:1175px;top:1024px"></div><div class="vs" style="left:1206px;top:1024px"></div><div class="vs" style="left:1237px;top:1024px"></div><div class="vs" style="left:1268px;top:1024px"></div><div class="vs" style="left:1299px;top:1024px"></div><div class="vs" style="left:1330px;top:1024px"></div><div class="vs" style="left:1360px;top:1024px"></div><div class="vs" style="left:1391px;top:1024px"></div><div class="vs" style="left:1422px;top:1024px"></div><div class="vs" style="left:1452px;top:1024px"></div><div class="vs" style="left:1579px;top:1024px"></div><div class="vs" style="left:1654px;top:1024px"></div><div class="st" style="left:1140px;top:1025px">拴牢</div><svg class="abs" style="left:1182px;top:1023px" width="16" height="17" viewBox="0 0 24 24" ><rect x="1" y="1" width="22" height="22" fill="#d4d6e0" stroke="#787c88" stroke-width="1.6"/><path d="M4,11 A8,8 0 0 1 18.5,8 l1.8,-2.6 l1,7 l-6.6,-.6 l2,-2 A5,5 0 0 0 7.4,11.5z" fill="#f08090" stroke="#d04050" stroke-width=".6"/><path d="M20,13 A8,8 0 0 1 5.5,16 l-1.8,2.6 l-1,-7 l6.6,.6 l-2,2 A5,5 0 0 0 16.6,12.5z" fill="#f08090" stroke="#d04050" stroke-width=".6"/></svg><div class="abs" style="left:1212.5px;top:1021.5px;width:17.5px;height:18.5px;background:#fbe08a"></div><svg class="abs" style="left:1213px;top:1023px" width="16" height="17" viewBox="0 0 24 24" ><circle cx="10" cy="9" r="6" fill="#c878d0" stroke="#803890" stroke-width="1"/><path d="M10,9l9,9l-4,.5l2,4l-2,1l-2,-4l-3,2.5z" fill="#fff" stroke="#303030" stroke-width=".9"/><path d="M3,3l3,3M17,3l-3,3M3,16l3,-3" stroke="#e8a020" stroke-width="1.6"/></svg><svg class="abs" style="left:1244px;top:1023px" width="16" height="17" viewBox="0 0 24 24" ><path d="M3,12l9,-8l9,8" fill="none" stroke="#b07030" stroke-width="2.4"/><rect x="5.5" y="12" width="13" height="10" fill="#e8ecf8" stroke="#5870b0" stroke-width="1"/><rect x="8" y="15" width="3.4" height="3.4" fill="#4870d0"/><rect x="13" y="15" width="3.4" height="3.4" fill="#4870d0"/><path d="M14,6l8,-4l-3,6z" fill="#e8b030" stroke="#906010" stroke-width=".6"/></svg><svg class="abs" style="left:1275px;top:1023px" width="16" height="17" viewBox="0 0 24 24" ><text x="12" y="20" font-size="24" font-weight="bold" text-anchor="middle" fill="#4878d0" stroke="#204090" stroke-width=".6" font-family="Liberation Sans,sans-serif">?</text></svg><svg class="abs" style="left:1306px;top:1023px" width="16" height="17" viewBox="0 0 24 24" ><path d="M11,9L17,6L23,9L17,12z" fill="#88b8f0" stroke="#204080" stroke-width=".6"/><path d="M11,9L17,12V21L11,18z" fill="#4878c8" stroke="#204080" stroke-width=".6"/><path d="M23,9L17,12V21L23,18z" fill="#284c98" stroke="#204080" stroke-width=".6"/><path d="M2,16l7,-4M2,6l7,5M5,21l5,-8" stroke="#e02020" stroke-width="1.8"/><rect x="8" y="9" width="6" height="6" fill="#40a0a0" stroke="#104040" stroke-width=".6"/></svg><div class="abs" style="left:1336.5px;top:1021.5px;width:17.5px;height:18.5px;background:#fbe08a"></div><svg class="abs" style="left:1337px;top:1023px" width="16" height="17" viewBox="0 0 24 24" ><path d="M2,7L12,3L22,7L12,11z" fill="#e870e8" stroke="#602060" stroke-width=".7"/><path d="M2,7L12,11V22L2,18z" fill="#5888e0" stroke="#203878" stroke-width=".7"/><path d="M22,7L12,11V22L22,18z" fill="#38c0d0" stroke="#205060" stroke-width=".7"/></svg><svg class="abs" style="left:1367px;top:1023px" width="16" height="17" viewBox="0 0 24 24" ><rect x="5.5" y="1" width="13" height="22" fill="#f0f0f0" stroke="#686868" stroke-width="1.4"/><rect x="6.5" y="7.5" width="11" height="4.5" fill="#f0a030"/><path d="M5.5,6.5h13M5.5,12.5h13M5.5,18h13" stroke="#686868" stroke-width="1.4"/></svg><svg class="abs" style="left:1398.5px;top:1023px" width="16" height="17" viewBox="0 0 24 24" ><path d="M12,4.5a8.5,8.5 0 1 1 -8.5,8.5" fill="none" stroke="#209020" stroke-width="3"/><path d="M13.5,-0.5l-7.5,5l7.5,4.5z" fill="#209020"/><path d="M9,13.5h6M12,10.5v6" stroke="#2838b0" stroke-width="1.8"/></svg><svg class="abs" style="left:1429.5px;top:1023px" width="16" height="17" viewBox="0 0 24 24" ><rect x="1.5" y="1.5" width="21" height="21" fill="#e8eaf4" stroke="#585c74" stroke-width="2"/><path d="M12,2v20M2,12h20" stroke="#484c64" stroke-width="2.2"/></svg><div class="st" style="left:1463px;top:1025px">LS: 1.00 PS: 1.00</div><div class="st" style="left:1589px;top:1025px">单位: 毫米</div><div class="st" style="left:1663px;top:1025px;letter-spacing:.42px"><span style="color:#e00000">X =-0318.144</span> Y = 0333.460 Z = 0000.000</div><svg class="abs" style="left:1868px;top:26px" width="50" height="16" viewBox="0 0 50 16" shape-rendering="crispEdges"><path d="M3.5,10.5h8" stroke="#8c8478" stroke-width="1"/><path d="M20.5,5.5h6v6h-6zM22.5,5.5v-2h6v6h-2" fill="none" stroke="#8c8478" stroke-width="1"/><path d="M38,2.5l8,8M46,2.5l-8,8" stroke="#8c8478" stroke-width="1"/></svg>
<div id="task"><div style="position:absolute;left:345px;top:0;width:43px;height:7px;background:#6a645a"></div><div style="position:absolute;left:388px;top:0;width:2px;height:7px;background:#8a8478"></div><div style="position:absolute;left:1815px;top:5px;font-size:12px;line-height:11px;color:#e8e8e8">16:47</div></div>
</body></html>
